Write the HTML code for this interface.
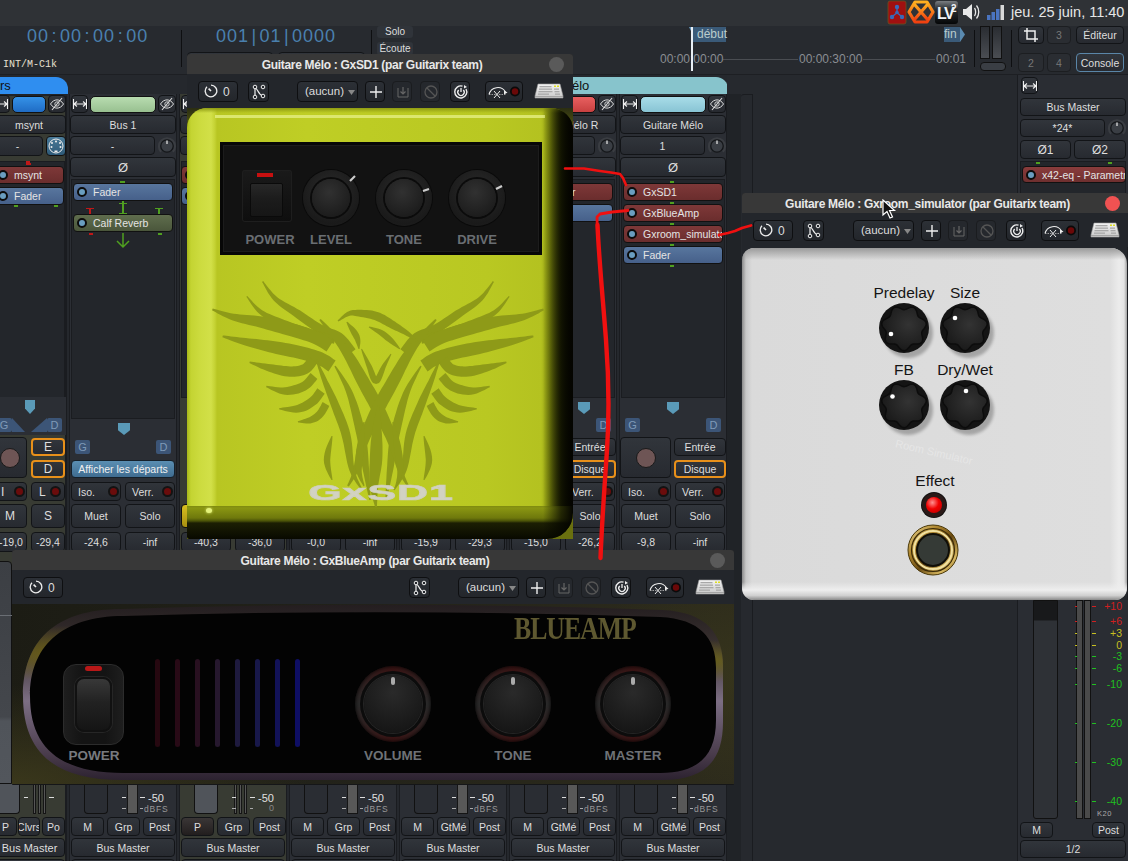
<!DOCTYPE html><html><head><meta charset="utf-8"><style>
*{margin:0;padding:0;box-sizing:border-box}
html,body{width:1128px;height:861px;overflow:hidden;background:#23262b;font-family:"Liberation Sans",sans-serif;color:#d8d8d8}
div{position:absolute}
.b{background:linear-gradient(#31353b,#272a30);border:1px solid #121417;border-radius:4px;font-size:10.5px;color:#dedede;text-align:center;display:flex;align-items:center;justify-content:center;white-space:nowrap;overflow:hidden}
.t{white-space:nowrap}
.plug{border:1px solid #111;border-radius:4px;font-size:10.5px;color:#e4e4e4;display:flex;align-items:center;white-space:nowrap;overflow:hidden;padding-left:19px}
.dot{position:absolute;left:3px;top:3px;width:10px;height:10px;border-radius:50%;background:#6a9ec0;border:2px solid #0c0c0c}
.tb{background:linear-gradient(#2c3036,#23262b);border:1px solid #0e0f11;border-radius:4px}
.led{position:absolute;width:11px;height:11px;border-radius:50%;background:#6a0c0c;border:2px solid #131313;top:3px}
svg{position:absolute}
</style></head><body>
<div style="left:0px;top:0px;width:1128px;height:26px;background:#2f3236"></div>
<div class="t" style="left:1011px;top:4px;font-size:14.5px;color:#e6e6e6">jeu. 25 juin, 11:40</div>
<svg width="130" height="26" style="left:884px;top:0px"><defs><linearGradient id="og" x1="0" y1="0" x2="0" y2="1"><stop offset="0" stop-color="#ffb020"/><stop offset="1" stop-color="#f04010"/></linearGradient><linearGradient id="lvg" x1="0" y1="0" x2="0" y2="1"><stop offset="0" stop-color="#7a7e82"/><stop offset="0.35" stop-color="#2a2e32"/><stop offset="1" stop-color="#050607"/></linearGradient></defs><rect x="4" y="1" width="18" height="23" rx="2" fill="#a01010" stroke="#6a5020" stroke-width="0.8"/><g fill="#3a6ab8"><circle cx="13" cy="7" r="2.2"/><circle cx="8" cy="17" r="2.2"/><circle cx="18" cy="17" r="2.2"/><circle cx="13" cy="12.5" r="1.8"/></g><path d="M13 9 V12 M12 13.5 L9 16 M14 13.5 L17 16" stroke="#3a6ab8" stroke-width="1.4"/><polygon points="31,2 43,2 49,12 43,22 31,22 25,12" fill="none" stroke="url(#og)" stroke-width="3.2" stroke-linejoin="round"/><path d="M30.5 4.5 L43.5 19.5 M43.5 4.5 L30.5 19.5" stroke="url(#og)" stroke-width="3.2"/><rect x="51" y="1" width="23" height="23" rx="3" fill="url(#lvg)"/><text x="53" y="19" font-family="Liberation Sans" font-weight="bold" font-size="16" fill="#eef2f6" letter-spacing="-1.5">LV</text><text x="67" y="12" font-family="Liberation Sans" font-weight="bold" font-size="10" fill="#eef2f6">2</text><path d="M79 9 H82 L88 4 V20 L82 15 H79 Z" fill="#e8e8e8"/><path d="M90.5 8 C92 10 92 14 90.5 16 M92.5 5.5 C95.5 9 95.5 15 92.5 18.5" stroke="#e8e8e8" stroke-width="1.3" fill="none"/><rect x="103" y="15" width="3.5" height="5" fill="#4a74c0"/><rect x="107.5" y="12" width="3.5" height="8" fill="#4a74c0"/><rect x="112" y="9" width="3.5" height="11" fill="#4a74c0"/><rect x="116.5" y="5" width="3.5" height="15" fill="#d8d8d8"/></svg>
<div style="left:0px;top:26px;width:1128px;height:49px;background:#272a2f"></div>
<div style="left:0px;top:74px;width:1128px;height:1px;background:#1d1f23"></div>
<div class="t" style="left:27px;top:26px;color:#4a80ae;font-size:18px;letter-spacing:1px">00<span style="margin:0 2.5px">:</span>00<span style="margin:0 2.5px">:</span>00<span style="margin:0 2.5px">:</span>00</div>
<div class="t" style="left:3px;top:59px;font-size:10px;color:#e8e0d0;font-family:'Liberation Mono'">INT/M-C1k</div>
<div style="left:181px;top:30px;width:1px;height:37px;background:#0e0f11"></div>
<div class="t" style="left:216px;top:26px;color:#4a80ae;font-size:18px;letter-spacing:1px">001<span style="margin:0 2.4px">|</span>01<span style="margin:0 2.4px">|</span>0000</div>
<div style="left:371px;top:30px;width:1px;height:37px;background:#0e0f11"></div>
<div class="b" style="left:187px;top:52px;width:86px;height:20px;"></div>
<div class="b" style="left:278px;top:52px;width:87px;height:20px;"></div>
<div style="left:377px;top:26px;width:36px;height:12px;background:#30343a;border-radius:3px;font-size:10px;color:#ddd;text-align:center;line-height:12px">Solo</div>
<div style="left:377px;top:42px;width:36px;height:13px;background:#30343a;border-radius:3px;font-size:10px;color:#ddd;text-align:center;line-height:13px">Écoute</div>
<div style="left:660px;top:59px;width:290px;height:1px;background:#4a4d52"></div>
<div style="left:693px;top:27px;width:33px;height:15px;background:#3a5a78;font-size:12px;color:#bcc;line-height:15px;padding-left:4px">début</div>
<div style="left:689px;top:27px;width:4px;height:8px;background:#6a9ac0;clip-path:polygon(0 0,100% 0,100% 100%)"></div>
<div class="t" style="left:660px;top:52px;font-size:12px;color:#8a8d92;background:#272a2f">00:00:00:00</div>
<div class="t" style="left:798px;top:52px;font-size:12px;color:#8a8d92;background:#272a2f;padding:0 1px">00:00:30:00</div>
<div class="t" style="left:935px;top:52px;font-size:12px;color:#8a8d92;background:#272a2f;padding:0 1px">00:01</div>
<div style="left:691px;top:27px;width:2px;height:44px;background:#e8eef4"></div>
<div style="left:944px;top:27px;width:16px;height:15px;background:#3a5a78;font-size:12px;color:#bcc;line-height:15px">fin</div>
<div style="left:960px;top:27px;width:5px;height:15px;background:#5a8ab0;clip-path:polygon(0 0,100% 50%,0 100%)"></div>
<div style="left:974px;top:30px;width:1px;height:37px;background:#0e0f11"></div>
<div style="left:1011px;top:30px;width:1px;height:37px;background:#0e0f11"></div>
<div style="left:980px;top:26px;width:10px;height:33px;background:linear-gradient(#2a2d32,#4a4d52);border:1px solid #111"></div>
<div style="left:992px;top:26px;width:10px;height:33px;background:linear-gradient(#2a2d32,#4a4d52);border:1px solid #111"></div>
<div style="left:980px;top:62px;width:26px;height:9px;background:#3a3e44;border-radius:4px;border:1px solid #111"></div>
<div class="b" style="left:1018px;top:26px;width:26px;height:18px;"><svg width="16" height="16" viewBox="0 0 16 16" style="left:4px;top:0px"><path d="M4 1 V12 H15 M1 4 H12 V15" fill="none" stroke="#eee" stroke-width="1.5"/></svg></div>
<div class="b" style="left:1047px;top:26px;width:24px;height:18px;background:#2a2d32;border-color:#1c1e21"><span style="color:#777">3</span></div>
<div class="b" style="left:1076px;top:26px;width:48px;height:18px;font-size:10.5px">Éditeur</div>
<div class="b" style="left:1018px;top:53px;width:26px;height:19px;background:#2a2d32;border-color:#1c1e21"><span style="color:#777">2</span></div>
<div class="b" style="left:1047px;top:53px;width:24px;height:19px;background:#2a2d32;border-color:#1c1e21"><span style="color:#777">4</span></div>
<div class="b" style="left:1076px;top:53px;width:48px;height:19px;border:1px solid #5a86a8;font-size:10.5px">Console</div>
<div style="left:0px;top:75px;width:1128px;height:786px;background:#25282d"></div>
<div style="left:-4px;top:94px;width:71px;height:767px;background:#383b33;border-right:2px solid #1a1c20"></div>
<div style="left:-4px;top:94px;width:71px;height:2px;background:#202327"></div>
<div class="b" style="left:-8px;top:95px;width:18px;height:18px;"><svg width="16" height="12" viewBox="0 0 16 12" style="left:0px;top:2px"><path d="M1.5 1 V11 M14.5 1 V11 M2 6 H14 M2 6 L5 3.5 M2 6 L5 8.5 M14 6 L11 3.5 M14 6 L11 8.5" fill="none" stroke="#eee" stroke-width="1.1"/></svg></div>
<div style="left:12px;top:96px;width:34px;height:17px;background:linear-gradient(#3592e8,#1f6cc4);border-radius:5px;border:1px solid #111"></div>
<div class="b" style="left:48px;top:95px;width:18px;height:18px;"><svg width="16" height="14" viewBox="0 0 16 14" style="left:0px;top:1px"><path d="M1.5 7 C5 1.5 11 1.5 14.5 7 C11 12.5 5 12.5 1.5 7Z" fill="none" stroke="#ddd" stroke-width="1"/><circle cx="8" cy="7" r="2.2" fill="none" stroke="#ddd" stroke-width="0.9"/><path d="M3 13 L13 1" stroke="#ddd" stroke-width="1.1"/></svg></div>
<div class="b" style="left:-8px;top:115px;width:74px;height:19px;padding-left:0;justify-content:center;font-size:10.5px">msynt</div>
<div class="b" style="left:-8px;top:136px;width:51px;height:20px;">-</div>
<div style="left:46px;top:136px;width:20px;height:20px;background:linear-gradient(#4a7a98,#2e5a78);border:1px solid #111;border-radius:4px"></div>
<svg width="18" height="18" viewBox="0 0 18 18" style="left:47px;top:137px"><circle cx="9" cy="9" r="7" fill="none" stroke="#eee" stroke-width="1"/><circle cx="9" cy="4.5" r="1" fill="#eee"/><circle cx="5" cy="6" r="1" fill="#eee"/><circle cx="13" cy="6" r="1" fill="#eee"/><circle cx="4.5" cy="10" r="1" fill="#eee"/><circle cx="13.5" cy="10" r="1" fill="#eee"/><path d="M7.5 15 H10.5 V13.5 H7.5Z" fill="#eee"/></svg>
<div style="left:-4px;top:161px;width:69px;height:237px;background:#23262b;border:1px solid #1a1c20"></div>
<div style="left:26px;top:163px;width:5px;height:2px;background:#c01818"></div>
<div class="plug" style="left:-6px;top:166px;width:70px;height:18px;background:linear-gradient(#7e3838,#6a2d2d)"><div class="dot"></div>msynt</div>
<div class="plug" style="left:-6px;top:187px;width:70px;height:18px;background:linear-gradient(#58769e,#46608a)"><div class="dot"></div>Fader</div>
<div style="left:14px;top:205px;width:4px;height:2px;background:#50a020"></div>
<div style="left:54px;top:205px;width:4px;height:2px;background:#50a020"></div>
<div style="left:26px;top:161px;width:4px;height:2px;background:#c01818"></div>
<div style="left:-4px;top:397px;width:70px;height:38px;background:#2b2e34"></div>
<div style="left:25px;top:400px;width:10px;height:14px;background:#5a9ab8;clip-path:polygon(0 0,100% 0,100% 60%,50% 100%,0 60%)"></div>
<div style="left:-4px;top:418px;width:16px;height:14px;background:#3c5577;border-radius:2px;font-size:11px;color:#7f9ab8;text-align:center;line-height:14px">G</div>
<div style="left:47px;top:418px;width:15px;height:14px;background:#3c5577;border-radius:2px;font-size:11px;color:#7f9ab8;text-align:center;line-height:14px">D</div>
<div style="left:12px;top:418px;width:13px;height:14px;background:#3c5577;clip-path:polygon(0 0,100% 100%,0 100%)"></div>
<div style="left:31px;top:418px;width:16px;height:14px;background:#3c5577;clip-path:polygon(100% 0,100% 100%,0 100%)"></div>
<div class="b" style="left:-24px;top:437px;width:51px;height:41px;"></div>
<div style="left:0px;top:448px;width:20px;height:20px;border-radius:50%;background:#6e5555;border:1px solid #1a1a1a"></div>
<div class="b" style="left:31px;top:438px;width:34px;height:18px;border:2px solid #e8901a;font-size:12px">E</div>
<div class="b" style="left:31px;top:460px;width:34px;height:18px;border:2px solid #e8901a;font-size:12px">D</div>
<div class="b" style="left:-24px;top:482px;width:51px;height:19px;justify-content:flex-start;padding-left:24px;font-size:12px">I</div>
<div style="left:14px;top:486px;width:11px;height:11px;border-radius:50%;background:#6a0c0c;border:2px solid #131313"></div>
<div class="b" style="left:31px;top:482px;width:34px;height:19px;justify-content:flex-start;padding-left:7px;font-size:12px">L</div>
<div style="left:50px;top:486px;width:11px;height:11px;border-radius:50%;background:#6a0c0c;border:2px solid #131313"></div>
<div class="b" style="left:-24px;top:504px;width:51px;height:24px;justify-content:flex-start;padding-left:28px;font-size:12px">M</div>
<div class="b" style="left:31px;top:504px;width:34px;height:24px;font-size:12px">S</div>
<div class="b" style="left:-24px;top:532px;width:51px;height:20px;justify-content:flex-start;padding-left:22px">-19,0</div>
<div class="b" style="left:31px;top:532px;width:34px;height:20px;">-29,4</div>
<div style="left:-4px;top:561px;width:16px;height:223px;background:linear-gradient(#3c3f44,#44474c 70%,#50545a 72%,#52565c);border:1px solid #111;border-radius:0 4px 0 0"></div>
<div style="left:-4px;top:615px;width:16px;height:1px;background:#6a6e74"></div>
<div style="left:-4px;top:784px;width:24px;height:30px;background:#50545a;border:1px solid #111;border-top:none;border-radius:0 0 4px 4px"></div>
<div style="left:33px;top:784px;width:3px;height:30px;background:#555;border:1px solid #151515"></div>
<div style="left:38px;top:784px;width:3px;height:30px;background:#555;border:1px solid #151515"></div>
<div style="left:43px;top:784px;width:3px;height:30px;background:#555;border:1px solid #151515"></div>
<div style="left:24px;top:797px;width:4px;height:1px;background:#ddd"></div>
<div style="left:49px;top:797px;width:5px;height:1px;background:#ddd"></div>
<div class="b" style="left:-6px;top:817px;width:23px;height:19px;">P</div>
<div class="b" style="left:18px;top:817px;width:22px;height:19px;font-size:10.5px">Clvrs</div>
<div class="b" style="left:42px;top:817px;width:23px;height:19px;">Po</div>
<div class="b" style="left:-6px;top:838px;width:71px;height:19px;font-size:11px">Bus Master</div>
<div class="b" style="left:-6px;top:859px;width:71px;height:19px;"></div>
<div style="left:69px;top:94px;width:108px;height:767px;background:#2b2e34;border-left:1px solid #1a1c20;border-right:1px solid #1a1c20"></div>
<div class="b" style="left:71px;top:95px;width:17px;height:18px;"><svg width="16" height="12" viewBox="0 0 16 12" style="left:0px;top:2px"><path d="M1.5 1 V11 M14.5 1 V11 M2 6 H14 M2 6 L5 3.5 M2 6 L5 8.5 M14 6 L11 3.5 M14 6 L11 8.5" fill="none" stroke="#eee" stroke-width="1.1"/></svg></div>
<div style="left:90px;top:96px;width:66px;height:17px;background:linear-gradient(#b8dcb0,#98c090);border-radius:5px;border:1px solid #111"></div>
<div class="b" style="left:158px;top:95px;width:18px;height:18px;"><svg width="16" height="14" viewBox="0 0 16 14" style="left:0px;top:1px"><path d="M1.5 7 C5 1.5 11 1.5 14.5 7 C11 12.5 5 12.5 1.5 7Z" fill="none" stroke="#ddd" stroke-width="1"/><circle cx="8" cy="7" r="2.2" fill="none" stroke="#ddd" stroke-width="0.9"/><path d="M3 13 L13 1" stroke="#ddd" stroke-width="1.1"/></svg></div>
<div class="b" style="left:70px;top:115px;width:106px;height:19px;font-size:10.5px">Bus 1</div>
<div class="b" style="left:70px;top:136px;width:85px;height:19px;">-</div>
<svg width="20" height="20" style="left:157px;top:136px"><path d="M4.2 15.8 A8 8 0 1 1 15.8 15.8" fill="none" stroke="#3a3d42" stroke-width="2.2"/><circle cx="10" cy="10" r="6.2" fill="#3a3e44" stroke="#141619" stroke-width="1.2"/><path d="M10 4.5 V8" stroke="#ddd" stroke-width="1.3"/></svg>
<div class="b" style="left:70px;top:157px;width:106px;height:20px;font-size:13px">Ø</div>
<div style="left:71px;top:179px;width:104px;height:240px;background:#23262b;border:1px solid #1a1c20"></div>
<div style="left:120px;top:181px;width:5px;height:2px;background:#50a020"></div>
<div class="plug" style="left:73px;top:183px;width:100px;height:18px;background:linear-gradient(#58769e,#46608a)"><div class="dot"></div>Fader</div>
<div style="left:122px;top:201px;width:2px;height:14px;background:#50a020"></div>
<div style="left:119px;top:203px;width:8px;height:1px;background:#50a020"></div>
<div style="left:119px;top:213px;width:8px;height:1px;background:#50a020"></div>
<div style="left:86px;top:208px;width:8px;height:1px;background:#c01818"></div>
<div style="left:89px;top:208px;width:2px;height:6px;background:#c01818"></div>
<div style="left:155px;top:208px;width:8px;height:1px;background:#50a020"></div>
<div style="left:158px;top:208px;width:2px;height:6px;background:#50a020"></div>
<div class="plug" style="left:73px;top:214px;width:100px;height:18px;background:linear-gradient(#5f6d4d,#4a563b)"><div class="dot"></div>Calf Reverb</div>
<div style="left:89px;top:233px;width:4px;height:2px;background:#c01818"></div>
<div style="left:158px;top:233px;width:4px;height:2px;background:#50a020"></div>
<svg width="16" height="16" style="left:115px;top:233px"><path d="M8 0 V14 M2 8 L8 14 L14 8" fill="none" stroke="#50a020" stroke-width="1.5"/></svg>
<div style="left:118px;top:423px;width:12px;height:12px;background:#5a9ab8;clip-path:polygon(0 0,100% 0,100% 60%,50% 100%,0 60%)"></div>
<div style="left:75px;top:440px;width:15px;height:14px;background:#3c5577;border-radius:2px;font-size:11px;color:#7f9ab8;text-align:center;line-height:14px">G</div>
<div style="left:156px;top:440px;width:15px;height:14px;background:#3c5577;border-radius:2px;font-size:11px;color:#7f9ab8;text-align:center;line-height:14px">D</div>
<div class="b" style="left:71px;top:460px;width:104px;height:18px;background:linear-gradient(#5a8eb2,#3f6c90);color:#f0f0f0;font-size:10.5px;border-color:#15202a">Afficher les départs</div>
<div class="b" style="left:71px;top:482px;width:50px;height:19px;justify-content:flex-start;padding-left:6px;font-size:10.5px">Iso.</div>
<div style="left:108px;top:486px;width:11px;height:11px;border-radius:50%;background:#6a0c0c;border:2px solid #131313"></div>
<div class="b" style="left:125px;top:482px;width:50px;height:19px;justify-content:flex-start;padding-left:6px;font-size:10.5px">Verr.</div>
<div style="left:162px;top:486px;width:11px;height:11px;border-radius:50%;background:#6a0c0c;border:2px solid #131313"></div>
<div class="b" style="left:71px;top:504px;width:50px;height:24px;font-size:10.5px">Muet</div>
<div class="b" style="left:125px;top:504px;width:50px;height:24px;font-size:10.5px">Solo</div>
<div class="b" style="left:71px;top:532px;width:50px;height:20px;">-24,6</div>
<div class="b" style="left:125px;top:532px;width:50px;height:20px;">-inf</div>
<div style="left:84px;top:784px;width:24px;height:30px;background:#2a2d33;border:1px solid #111;border-top:none;border-radius:0 0 4px 4px"></div>
<div style="left:127px;top:784px;width:11px;height:30px;background:#585858;border:1px solid #151515"></div>
<div style="left:122px;top:797px;width:4px;height:1px;background:#ddd"></div>
<div style="left:140px;top:797px;width:5px;height:1px;background:#ddd"></div>
<div style="left:122px;top:808px;width:4px;height:1px;background:#aaa"></div>
<div style="left:140px;top:808px;width:3px;height:1px;background:#aaa"></div>
<div class="t" style="left:148px;top:792px;font-size:11px;color:#e0e0e0">-50</div>
<div class="t" style="left:144px;top:804px;font-size:8.5px;color:#999;letter-spacing:0.8px">dBFS</div>
<div class="b" style="left:71px;top:817px;width:33px;height:19px;">M</div>
<div class="b" style="left:107px;top:817px;width:33px;height:19px;">Grp</div>
<div class="b" style="left:143px;top:817px;width:33px;height:19px;">Post</div>
<div class="b" style="left:71px;top:838px;width:104px;height:19px;">Bus Master</div>
<div class="b" style="left:71px;top:859px;width:104px;height:19px;"></div>
<div style="left:179px;top:94px;width:108px;height:767px;background:#383b33;border-left:1px solid #1a1c20;border-right:1px solid #1a1c20"></div>
<div class="b" style="left:181px;top:95px;width:17px;height:18px;"><svg width="16" height="12" viewBox="0 0 16 12" style="left:0px;top:2px"><path d="M1.5 1 V11 M14.5 1 V11 M2 6 H14 M2 6 L5 3.5 M2 6 L5 8.5 M14 6 L11 3.5 M14 6 L11 8.5" fill="none" stroke="#eee" stroke-width="1.1"/></svg></div>
<div style="left:200px;top:96px;width:66px;height:17px;background:#e0c030;border-radius:5px;border:1px solid #111"></div>
<div class="b" style="left:268px;top:95px;width:18px;height:18px;"><svg width="16" height="14" viewBox="0 0 16 14" style="left:0px;top:1px"><path d="M1.5 7 C5 1.5 11 1.5 14.5 7 C11 12.5 5 12.5 1.5 7Z" fill="none" stroke="#ddd" stroke-width="1"/><circle cx="8" cy="7" r="2.2" fill="none" stroke="#ddd" stroke-width="0.9"/><path d="M3 13 L13 1" stroke="#ddd" stroke-width="1.1"/></svg></div>
<div class="b" style="left:180px;top:115px;width:106px;height:19px;font-size:10.5px"></div>
<div class="b" style="left:180px;top:136px;width:85px;height:19px;">-</div>
<svg width="20" height="20" style="left:267px;top:136px"><path d="M4.2 15.8 A8 8 0 1 1 15.8 15.8" fill="none" stroke="#3a3d42" stroke-width="2.2"/><circle cx="10" cy="10" r="6.2" fill="#3a3e44" stroke="#141619" stroke-width="1.2"/><path d="M10 4.5 V8" stroke="#ddd" stroke-width="1.3"/></svg>
<div class="b" style="left:180px;top:157px;width:106px;height:20px;font-size:13px">Ø</div>
<div style="left:180px;top:157px;width:106px;height:22px;background:#383b33"></div>
<div style="left:181px;top:161px;width:104px;height:237px;background:#23262b;border:1px solid #1a1c20"></div>
<div class="plug" style="left:181px;top:166px;width:100px;height:18px;background:linear-gradient(#7e3838,#6a2d2d)"><div class="dot"></div>msynt</div>
<div class="plug" style="left:181px;top:187px;width:100px;height:18px;background:linear-gradient(#58769e,#46608a)"><div class="dot"></div>Fader</div>
<div style="left:180px;top:435px;width:106px;height:426px;background:#383b33"></div>
<div style="left:181px;top:504px;width:50px;height:24px;background:linear-gradient(#d8c020,#a89010);border:1px solid #111;border-radius:4px"></div>
<div class="b" style="left:181px;top:532px;width:50px;height:20px;">-40,3</div>
<div class="b" style="left:235px;top:532px;width:50px;height:20px;">-36,0</div>
<div style="left:194px;top:784px;width:24px;height:30px;background:#50545a;border:1px solid #111;border-top:none;border-radius:0 0 4px 4px"></div>
<div style="left:234px;top:784px;width:3px;height:30px;background:#555;border:1px solid #151515"></div>
<div style="left:239px;top:784px;width:3px;height:30px;background:#555;border:1px solid #151515"></div>
<div style="left:244px;top:784px;width:3px;height:30px;background:#555;border:1px solid #151515"></div>
<div style="left:232px;top:797px;width:4px;height:1px;background:#ddd"></div>
<div style="left:250px;top:797px;width:5px;height:1px;background:#ddd"></div>
<div style="left:232px;top:808px;width:4px;height:1px;background:#aaa"></div>
<div style="left:250px;top:808px;width:3px;height:1px;background:#aaa"></div>
<div class="t" style="left:258px;top:792px;font-size:11px;color:#e0e0e0">-50</div>
<div class="t" style="left:269px;top:803px;font-size:9px;color:#888">0</div>
<div class="b" style="left:181px;top:817px;width:33px;height:19px;background:linear-gradient(#3a3636,#221e1e)">P</div>
<div class="b" style="left:217px;top:817px;width:33px;height:19px;">Grp</div>
<div class="b" style="left:253px;top:817px;width:33px;height:19px;">Post</div>
<div class="b" style="left:181px;top:838px;width:104px;height:19px;">Bus Master</div>
<div class="b" style="left:181px;top:859px;width:104px;height:19px;"></div>
<div style="left:289px;top:94px;width:108px;height:767px;background:#2b2e34;border-left:1px solid #1a1c20;border-right:1px solid #1a1c20"></div>
<div class="b" style="left:291px;top:95px;width:17px;height:18px;"><svg width="16" height="12" viewBox="0 0 16 12" style="left:0px;top:2px"><path d="M1.5 1 V11 M14.5 1 V11 M2 6 H14 M2 6 L5 3.5 M2 6 L5 8.5 M14 6 L11 3.5 M14 6 L11 8.5" fill="none" stroke="#eee" stroke-width="1.1"/></svg></div>
<div style="left:310px;top:96px;width:66px;height:17px;background:#888;border-radius:5px;border:1px solid #111"></div>
<div class="b" style="left:378px;top:95px;width:18px;height:18px;"><svg width="16" height="14" viewBox="0 0 16 14" style="left:0px;top:1px"><path d="M1.5 7 C5 1.5 11 1.5 14.5 7 C11 12.5 5 12.5 1.5 7Z" fill="none" stroke="#ddd" stroke-width="1"/><circle cx="8" cy="7" r="2.2" fill="none" stroke="#ddd" stroke-width="0.9"/><path d="M3 13 L13 1" stroke="#ddd" stroke-width="1.1"/></svg></div>
<div class="b" style="left:290px;top:115px;width:106px;height:19px;font-size:10.5px"></div>
<div class="b" style="left:290px;top:136px;width:85px;height:19px;">-</div>
<svg width="20" height="20" style="left:377px;top:136px"><path d="M4.2 15.8 A8 8 0 1 1 15.8 15.8" fill="none" stroke="#3a3d42" stroke-width="2.2"/><circle cx="10" cy="10" r="6.2" fill="#3a3e44" stroke="#141619" stroke-width="1.2"/><path d="M10 4.5 V8" stroke="#ddd" stroke-width="1.3"/></svg>
<div class="b" style="left:290px;top:157px;width:106px;height:20px;font-size:13px">Ø</div>
<div class="b" style="left:291px;top:532px;width:50px;height:20px;">-0,0</div>
<div class="b" style="left:345px;top:532px;width:50px;height:20px;">-inf</div>
<div style="left:304px;top:784px;width:24px;height:30px;background:#2a2d33;border:1px solid #111;border-top:none;border-radius:0 0 4px 4px"></div>
<div style="left:347px;top:784px;width:11px;height:30px;background:#585858;border:1px solid #151515"></div>
<div style="left:342px;top:797px;width:4px;height:1px;background:#ddd"></div>
<div style="left:360px;top:797px;width:5px;height:1px;background:#ddd"></div>
<div style="left:342px;top:808px;width:4px;height:1px;background:#aaa"></div>
<div style="left:360px;top:808px;width:3px;height:1px;background:#aaa"></div>
<div class="t" style="left:368px;top:792px;font-size:11px;color:#e0e0e0">-50</div>
<div class="t" style="left:364px;top:804px;font-size:8.5px;color:#999;letter-spacing:0.8px">dBFS</div>
<div class="b" style="left:291px;top:817px;width:33px;height:19px;">M</div>
<div class="b" style="left:327px;top:817px;width:33px;height:19px;">Grp</div>
<div class="b" style="left:363px;top:817px;width:33px;height:19px;">Post</div>
<div class="b" style="left:291px;top:838px;width:104px;height:19px;">Bus Master</div>
<div class="b" style="left:291px;top:859px;width:104px;height:19px;"></div>
<div style="left:399px;top:94px;width:108px;height:767px;background:#2b2e34;border-left:1px solid #1a1c20;border-right:1px solid #1a1c20"></div>
<div class="b" style="left:401px;top:95px;width:17px;height:18px;"><svg width="16" height="12" viewBox="0 0 16 12" style="left:0px;top:2px"><path d="M1.5 1 V11 M14.5 1 V11 M2 6 H14 M2 6 L5 3.5 M2 6 L5 8.5 M14 6 L11 3.5 M14 6 L11 8.5" fill="none" stroke="#eee" stroke-width="1.1"/></svg></div>
<div style="left:420px;top:96px;width:66px;height:17px;background:#888;border-radius:5px;border:1px solid #111"></div>
<div class="b" style="left:488px;top:95px;width:18px;height:18px;"><svg width="16" height="14" viewBox="0 0 16 14" style="left:0px;top:1px"><path d="M1.5 7 C5 1.5 11 1.5 14.5 7 C11 12.5 5 12.5 1.5 7Z" fill="none" stroke="#ddd" stroke-width="1"/><circle cx="8" cy="7" r="2.2" fill="none" stroke="#ddd" stroke-width="0.9"/><path d="M3 13 L13 1" stroke="#ddd" stroke-width="1.1"/></svg></div>
<div class="b" style="left:400px;top:115px;width:106px;height:19px;font-size:10.5px"></div>
<div class="b" style="left:400px;top:136px;width:85px;height:19px;">-</div>
<svg width="20" height="20" style="left:487px;top:136px"><path d="M4.2 15.8 A8 8 0 1 1 15.8 15.8" fill="none" stroke="#3a3d42" stroke-width="2.2"/><circle cx="10" cy="10" r="6.2" fill="#3a3e44" stroke="#141619" stroke-width="1.2"/><path d="M10 4.5 V8" stroke="#ddd" stroke-width="1.3"/></svg>
<div class="b" style="left:400px;top:157px;width:106px;height:20px;font-size:13px">Ø</div>
<div class="b" style="left:401px;top:532px;width:50px;height:20px;">-15,9</div>
<div class="b" style="left:455px;top:532px;width:50px;height:20px;">-29,3</div>
<div style="left:414px;top:784px;width:24px;height:30px;background:#2a2d33;border:1px solid #111;border-top:none;border-radius:0 0 4px 4px"></div>
<div style="left:457px;top:784px;width:11px;height:30px;background:#585858;border:1px solid #151515"></div>
<div style="left:452px;top:797px;width:4px;height:1px;background:#ddd"></div>
<div style="left:470px;top:797px;width:5px;height:1px;background:#ddd"></div>
<div style="left:452px;top:808px;width:4px;height:1px;background:#aaa"></div>
<div style="left:470px;top:808px;width:3px;height:1px;background:#aaa"></div>
<div class="t" style="left:478px;top:792px;font-size:11px;color:#e0e0e0">-50</div>
<div class="t" style="left:474px;top:804px;font-size:8.5px;color:#999;letter-spacing:0.8px">dBFS</div>
<div class="b" style="left:401px;top:817px;width:33px;height:19px;">M</div>
<div class="b" style="left:437px;top:817px;width:33px;height:19px;">GtMé</div>
<div class="b" style="left:473px;top:817px;width:33px;height:19px;">Post</div>
<div class="b" style="left:401px;top:838px;width:104px;height:19px;">Bus Master</div>
<div class="b" style="left:401px;top:859px;width:104px;height:19px;"></div>
<div style="left:509px;top:94px;width:108px;height:767px;background:#2b2e34;border-left:1px solid #1a1c20;border-right:1px solid #1a1c20"></div>
<div class="b" style="left:511px;top:95px;width:17px;height:18px;"><svg width="16" height="12" viewBox="0 0 16 12" style="left:0px;top:2px"><path d="M1.5 1 V11 M14.5 1 V11 M2 6 H14 M2 6 L5 3.5 M2 6 L5 8.5 M14 6 L11 3.5 M14 6 L11 8.5" fill="none" stroke="#eee" stroke-width="1.1"/></svg></div>
<div style="left:530px;top:96px;width:66px;height:17px;background:linear-gradient(#e86060,#c84040);border-radius:5px;border:1px solid #111"></div>
<div class="b" style="left:598px;top:95px;width:18px;height:18px;"><svg width="16" height="14" viewBox="0 0 16 14" style="left:0px;top:1px"><path d="M1.5 7 C5 1.5 11 1.5 14.5 7 C11 12.5 5 12.5 1.5 7Z" fill="none" stroke="#ddd" stroke-width="1"/><circle cx="8" cy="7" r="2.2" fill="none" stroke="#ddd" stroke-width="0.9"/><path d="M3 13 L13 1" stroke="#ddd" stroke-width="1.1"/></svg></div>
<div class="b" style="left:510px;top:115px;width:106px;height:19px;font-size:10.5px">Guitare Mélo R</div>
<div class="b" style="left:510px;top:136px;width:85px;height:19px;">1</div>
<svg width="20" height="20" style="left:597px;top:136px"><path d="M4.2 15.8 A8 8 0 1 1 15.8 15.8" fill="none" stroke="#3a3d42" stroke-width="2.2"/><circle cx="10" cy="10" r="6.2" fill="#3a3e44" stroke="#141619" stroke-width="1.2"/><path d="M10 4.5 V8" stroke="#ddd" stroke-width="1.3"/></svg>
<div class="b" style="left:510px;top:157px;width:106px;height:20px;font-size:13px">Ø</div>
<div style="left:511px;top:179px;width:104px;height:219px;background:#23262b;border:1px solid #1a1c20"></div>
<div style="left:578px;top:402px;width:12px;height:12px;background:#5a9ab8;clip-path:polygon(0 0,100% 0,100% 60%,50% 100%,0 60%)"></div>
<div style="left:515px;top:418px;width:15px;height:14px;background:#3c5577;border-radius:2px;font-size:11px;color:#7f9ab8;text-align:center;line-height:14px">G</div>
<div style="left:596px;top:418px;width:15px;height:14px;background:#3c5577;border-radius:2px;font-size:11px;color:#7f9ab8;text-align:center;line-height:14px">D</div>
<div class="b" style="left:510px;top:437px;width:51px;height:41px;"></div>
<div style="left:526px;top:448px;width:20px;height:20px;border-radius:50%;background:#6e5555;border:1px solid #1a1a1a"></div>
<div class="b" style="left:564px;top:438px;width:52px;height:18px;font-size:10.5px">Entrée</div>
<div class="b" style="left:564px;top:460px;width:52px;height:18px;border:2px solid #e8901a;font-size:10.5px">Disque</div>
<div class="b" style="left:511px;top:482px;width:50px;height:19px;justify-content:flex-start;padding-left:6px;font-size:10.5px">Iso.</div>
<div style="left:548px;top:486px;width:11px;height:11px;border-radius:50%;background:#6a0c0c;border:2px solid #131313"></div>
<div class="b" style="left:565px;top:482px;width:50px;height:19px;justify-content:flex-start;padding-left:6px;font-size:10.5px">Verr.</div>
<div style="left:602px;top:486px;width:11px;height:11px;border-radius:50%;background:#6a0c0c;border:2px solid #131313"></div>
<div class="b" style="left:511px;top:504px;width:50px;height:24px;font-size:10.5px">Muet</div>
<div class="b" style="left:565px;top:504px;width:50px;height:24px;font-size:10.5px">Solo</div>
<div class="b" style="left:511px;top:532px;width:50px;height:20px;">-15,0</div>
<div class="b" style="left:565px;top:532px;width:50px;height:20px;">-26,2</div>
<div style="left:524px;top:784px;width:24px;height:30px;background:#2a2d33;border:1px solid #111;border-top:none;border-radius:0 0 4px 4px"></div>
<div style="left:567px;top:784px;width:11px;height:30px;background:#585858;border:1px solid #151515"></div>
<div style="left:562px;top:797px;width:4px;height:1px;background:#ddd"></div>
<div style="left:580px;top:797px;width:5px;height:1px;background:#ddd"></div>
<div style="left:562px;top:808px;width:4px;height:1px;background:#aaa"></div>
<div style="left:580px;top:808px;width:3px;height:1px;background:#aaa"></div>
<div class="t" style="left:588px;top:792px;font-size:11px;color:#e0e0e0">-50</div>
<div class="t" style="left:584px;top:804px;font-size:8.5px;color:#999;letter-spacing:0.8px">dBFS</div>
<div class="b" style="left:511px;top:817px;width:33px;height:19px;">M</div>
<div class="b" style="left:547px;top:817px;width:33px;height:19px;">GtMé</div>
<div class="b" style="left:583px;top:817px;width:33px;height:19px;">Post</div>
<div class="b" style="left:511px;top:838px;width:104px;height:19px;">Bus Master</div>
<div class="b" style="left:511px;top:859px;width:104px;height:19px;"></div>
<div class="plug" style="left:513px;top:183px;width:100px;height:18px;background:linear-gradient(#7e3838,#6a2d2d)"><div class="dot"></div><span style='padding-left:15px'>Mirror</span></div>
<div class="plug" style="left:513px;top:204px;width:100px;height:18px;background:linear-gradient(#58769e,#46608a)"><div class="dot"></div>Fader</div>
<div style="left:619px;top:94px;width:108px;height:767px;background:#2b2e34;border-left:1px solid #1a1c20;border-right:1px solid #1a1c20"></div>
<div class="b" style="left:621px;top:95px;width:17px;height:18px;"><svg width="16" height="12" viewBox="0 0 16 12" style="left:0px;top:2px"><path d="M1.5 1 V11 M14.5 1 V11 M2 6 H14 M2 6 L5 3.5 M2 6 L5 8.5 M14 6 L11 3.5 M14 6 L11 8.5" fill="none" stroke="#eee" stroke-width="1.1"/></svg></div>
<div style="left:640px;top:96px;width:66px;height:17px;background:linear-gradient(#a8dce8,#88c4d4);border-radius:5px;border:1px solid #111"></div>
<div class="b" style="left:708px;top:95px;width:18px;height:18px;"><svg width="16" height="14" viewBox="0 0 16 14" style="left:0px;top:1px"><path d="M1.5 7 C5 1.5 11 1.5 14.5 7 C11 12.5 5 12.5 1.5 7Z" fill="none" stroke="#ddd" stroke-width="1"/><circle cx="8" cy="7" r="2.2" fill="none" stroke="#ddd" stroke-width="0.9"/><path d="M3 13 L13 1" stroke="#ddd" stroke-width="1.1"/></svg></div>
<div class="b" style="left:620px;top:115px;width:106px;height:19px;font-size:10.5px">Guitare Mélo</div>
<div class="b" style="left:620px;top:136px;width:85px;height:19px;">1</div>
<svg width="20" height="20" style="left:707px;top:136px"><path d="M4.2 15.8 A8 8 0 1 1 15.8 15.8" fill="none" stroke="#3a3d42" stroke-width="2.2"/><circle cx="10" cy="10" r="6.2" fill="#3a3e44" stroke="#141619" stroke-width="1.2"/><path d="M10 4.5 V8" stroke="#ddd" stroke-width="1.3"/></svg>
<div class="b" style="left:620px;top:157px;width:106px;height:20px;font-size:13px">Ø</div>
<div style="left:621px;top:179px;width:104px;height:219px;background:#23262b;border:1px solid #1a1c20"></div>
<div style="left:667px;top:402px;width:12px;height:12px;background:#5a9ab8;clip-path:polygon(0 0,100% 0,100% 60%,50% 100%,0 60%)"></div>
<div style="left:625px;top:418px;width:15px;height:14px;background:#3c5577;border-radius:2px;font-size:11px;color:#7f9ab8;text-align:center;line-height:14px">G</div>
<div style="left:706px;top:418px;width:15px;height:14px;background:#3c5577;border-radius:2px;font-size:11px;color:#7f9ab8;text-align:center;line-height:14px">D</div>
<div class="b" style="left:620px;top:437px;width:51px;height:41px;"></div>
<div style="left:636px;top:448px;width:20px;height:20px;border-radius:50%;background:#6e5555;border:1px solid #1a1a1a"></div>
<div class="b" style="left:674px;top:438px;width:52px;height:18px;font-size:10.5px">Entrée</div>
<div class="b" style="left:674px;top:460px;width:52px;height:18px;border:2px solid #e8901a;font-size:10.5px">Disque</div>
<div class="b" style="left:621px;top:482px;width:50px;height:19px;justify-content:flex-start;padding-left:6px;font-size:10.5px">Iso.</div>
<div style="left:658px;top:486px;width:11px;height:11px;border-radius:50%;background:#6a0c0c;border:2px solid #131313"></div>
<div class="b" style="left:675px;top:482px;width:50px;height:19px;justify-content:flex-start;padding-left:6px;font-size:10.5px">Verr.</div>
<div style="left:712px;top:486px;width:11px;height:11px;border-radius:50%;background:#6a0c0c;border:2px solid #131313"></div>
<div class="b" style="left:621px;top:504px;width:50px;height:24px;font-size:10.5px">Muet</div>
<div class="b" style="left:675px;top:504px;width:50px;height:24px;font-size:10.5px">Solo</div>
<div class="b" style="left:621px;top:532px;width:50px;height:20px;">-9,8</div>
<div class="b" style="left:675px;top:532px;width:50px;height:20px;">-inf</div>
<div style="left:634px;top:784px;width:24px;height:30px;background:#2a2d33;border:1px solid #111;border-top:none;border-radius:0 0 4px 4px"></div>
<div style="left:677px;top:784px;width:11px;height:30px;background:#585858;border:1px solid #151515"></div>
<div style="left:672px;top:797px;width:4px;height:1px;background:#ddd"></div>
<div style="left:690px;top:797px;width:5px;height:1px;background:#ddd"></div>
<div style="left:672px;top:808px;width:4px;height:1px;background:#aaa"></div>
<div style="left:690px;top:808px;width:3px;height:1px;background:#aaa"></div>
<div class="t" style="left:698px;top:792px;font-size:11px;color:#e0e0e0">-50</div>
<div class="t" style="left:694px;top:804px;font-size:8.5px;color:#999;letter-spacing:0.8px">dBFS</div>
<div class="b" style="left:621px;top:817px;width:33px;height:19px;">M</div>
<div class="b" style="left:657px;top:817px;width:33px;height:19px;">GtMé</div>
<div class="b" style="left:693px;top:817px;width:33px;height:19px;">Post</div>
<div class="b" style="left:621px;top:838px;width:104px;height:19px;">Bus Master</div>
<div class="b" style="left:621px;top:859px;width:104px;height:19px;"></div>
<div class="plug" style="left:623px;top:183px;width:100px;height:18px;background:linear-gradient(#7e3838,#6a2d2d)"><div class="dot"></div>GxSD1</div>
<div style="left:670px;top:181px;width:4px;height:2px;background:#50a020"></div>
<div class="plug" style="left:623px;top:204px;width:100px;height:18px;background:linear-gradient(#7e3838,#6a2d2d)"><div class="dot"></div>GxBlueAmp</div>
<div style="left:670px;top:202px;width:4px;height:2px;background:#50a020"></div>
<div class="plug" style="left:623px;top:225px;width:100px;height:18px;background:linear-gradient(#7e3838,#6a2d2d)"><div class="dot"></div>Gxroom_simulator</div>
<div style="left:670px;top:223px;width:4px;height:2px;background:#50a020"></div>
<div class="plug" style="left:623px;top:246px;width:100px;height:18px;background:linear-gradient(#58769e,#46608a)"><div class="dot"></div>Fader</div>
<div style="left:670px;top:244px;width:4px;height:2px;background:#50a020"></div>
<div style="left:670px;top:265px;width:4px;height:2px;background:#50a020"></div>
<div style="left:0px;top:77px;width:68px;height:17px;background:#2f8ef0;border-radius:0 12px 0 0;font-size:13px;color:#111;line-height:17px">rs</div>
<div style="left:572px;top:77px;width:156px;height:17px;background:#87c4cc;border-radius:0 12px 0 0;font-size:13px;color:#111;line-height:17px">élo</div>
<div style="left:727px;top:75px;width:291px;height:786px;background:#26292e"></div>
<div style="left:727px;top:94px;width:14px;height:767px;background:#202327"></div>
<div style="left:741px;top:94px;width:12px;height:767px;background:#26292e;border-right:1px solid #1a1c20;border-top:1px solid #1a1c20;border-radius:3px 0 0 0"></div>
<div style="left:1017px;top:75px;width:111px;height:786px;background:#2a2d33;border-left:1px solid #1a1c20"></div>
<div class="b" style="left:1021px;top:77px;width:17px;height:17px;"><svg width="16" height="12" viewBox="0 0 16 12" style="left:0px;top:2px"><path d="M1.5 1 V11 M14.5 1 V11 M2 6 H14 M2 6 L5 3.5 M2 6 L5 8.5 M14 6 L11 3.5 M14 6 L11 8.5" fill="none" stroke="#eee" stroke-width="1.1"/></svg></div>
<div class="b" style="left:1020px;top:98px;width:106px;height:18px;font-size:10.5px">Bus Master</div>
<div class="b" style="left:1020px;top:119px;width:85px;height:18px;">*24*</div>
<svg width="20" height="20" style="left:1107px;top:118px"><path d="M4.2 15.8 A8 8 0 1 1 15.8 15.8" fill="none" stroke="#3a3d42" stroke-width="2.2"/><circle cx="10" cy="10" r="6.2" fill="#3a3e44" stroke="#141619" stroke-width="1.2"/><path d="M10 4.5 V8" stroke="#ddd" stroke-width="1.3"/></svg>
<div class="b" style="left:1020px;top:140px;width:51px;height:19px;font-size:12px">Ø1</div>
<div class="b" style="left:1074px;top:140px;width:52px;height:19px;font-size:12px">Ø2</div>
<div style="left:1020px;top:161px;width:106px;height:40px;background:#23262b;border:1px solid #1a1c20"></div>
<div style="left:1036px;top:162px;width:4px;height:2px;background:#50a020"></div>
<div style="left:1108px;top:162px;width:4px;height:2px;background:#50a020"></div>
<div class="plug" style="left:1022px;top:166px;width:104px;height:17px;background:linear-gradient(#8a3c3c,#6e2f2f)"><div class="dot"></div>x42-eq - Parametr</div>
<div style="left:1033px;top:600px;width:25px;height:219px;background:linear-gradient(#18191b 0,#18191b 19px,#2e3136 20px);border:1px solid #111;border-radius:0 0 3px 3px"></div>
<div style="left:1076px;top:600px;width:7px;height:219px;background:#4a4a4a;border:1px solid #111"></div>
<div style="left:1084px;top:600px;width:7px;height:219px;background:#4a4a4a;border:1px solid #111"></div>
<div style="left:1075px;top:606px;width:2px;height:1px;background:#d02020"></div>
<div style="left:1092px;top:606px;width:4px;height:1px;background:#d02020"></div>
<div class="t" style="left:1096px;top:600px;width:26px;text-align:right;font-size:10.5px;color:#d02020">+10</div>
<div style="left:1075px;top:621px;width:2px;height:1px;background:#d02020"></div>
<div style="left:1092px;top:621px;width:4px;height:1px;background:#d02020"></div>
<div class="t" style="left:1096px;top:615px;width:26px;text-align:right;font-size:10.5px;color:#d02020">+6</div>
<div style="left:1075px;top:633px;width:2px;height:1px;background:#c8c020"></div>
<div style="left:1092px;top:633px;width:4px;height:1px;background:#c8c020"></div>
<div class="t" style="left:1096px;top:627px;width:26px;text-align:right;font-size:10.5px;color:#c8c020">+3</div>
<div style="left:1075px;top:645px;width:2px;height:1px;background:#c8c020"></div>
<div style="left:1092px;top:645px;width:4px;height:1px;background:#c8c020"></div>
<div class="t" style="left:1096px;top:639px;width:26px;text-align:right;font-size:10.5px;color:#c8c020">0</div>
<div style="left:1075px;top:656px;width:2px;height:1px;background:#20c020"></div>
<div style="left:1092px;top:656px;width:4px;height:1px;background:#20c020"></div>
<div class="t" style="left:1096px;top:650px;width:26px;text-align:right;font-size:10.5px;color:#20c020">-3</div>
<div style="left:1075px;top:668px;width:2px;height:1px;background:#20c020"></div>
<div style="left:1092px;top:668px;width:4px;height:1px;background:#20c020"></div>
<div class="t" style="left:1096px;top:662px;width:26px;text-align:right;font-size:10.5px;color:#20c020">-6</div>
<div style="left:1075px;top:684px;width:2px;height:1px;background:#20c020"></div>
<div style="left:1092px;top:684px;width:4px;height:1px;background:#20c020"></div>
<div class="t" style="left:1096px;top:678px;width:26px;text-align:right;font-size:10.5px;color:#20c020">-10</div>
<div style="left:1075px;top:723px;width:2px;height:1px;background:#20c020"></div>
<div style="left:1092px;top:723px;width:4px;height:1px;background:#20c020"></div>
<div class="t" style="left:1096px;top:717px;width:26px;text-align:right;font-size:10.5px;color:#20c020">-20</div>
<div style="left:1075px;top:762px;width:2px;height:1px;background:#20c020"></div>
<div style="left:1092px;top:762px;width:4px;height:1px;background:#20c020"></div>
<div class="t" style="left:1096px;top:756px;width:26px;text-align:right;font-size:10.5px;color:#20c020">-30</div>
<div style="left:1075px;top:801px;width:2px;height:1px;background:#20c020"></div>
<div style="left:1092px;top:801px;width:4px;height:1px;background:#20c020"></div>
<div class="t" style="left:1096px;top:795px;width:26px;text-align:right;font-size:10.5px;color:#20c020">-40</div>
<div class="t" style="left:1097px;top:809px;font-size:7.5px;color:#aaa;letter-spacing:0.5px">K20</div>
<div class="b" style="left:1020px;top:822px;width:33px;height:16px;">M</div>
<div class="b" style="left:1092px;top:822px;width:33px;height:16px;">Post</div>
<div class="b" style="left:1020px;top:840px;width:106px;height:18px;">1/2</div><div style="left:187px;top:54px;width:386px;height:485px;background:#23262b;border:1px solid #151618;overflow:hidden;border-radius:3px 3px 0 0"></div>
<div style="left:187px;top:54px;width:386px;height:20px;background:#383838;border-radius:3px 3px 0 0"></div>
<div class="t" style="left:191px;top:58px;width:362px;text-align:center;font-size:12px;font-weight:bold;color:#e8e8e8;letter-spacing:-0.3px">Guitare Mélo : GxSD1 (par Guitarix team)</div>
<div style="left:549px;top:57px;width:15px;height:15px;background:#5a5a5a;border-radius:50%"></div>
<div style="left:187px;top:74px;width:386px;height:34px;background:#23262b"></div>
<div class="tb" style="left:198px;top:81px;width:40px;height:21px"><svg width="14" height="14" viewBox="0 0 14 14" style="left:5px;top:2px"><path d="M7 1.2 A5.8 5.8 0 1 1 3 2.8" fill="none" stroke="#eee" stroke-width="1.3"/><path d="M4.6 4.6 L7 7" stroke="#eee" stroke-width="1.6"/></svg><div class="t" style="left:24px;top:3px;font-size:12px;color:#ddd">0</div></div>
<div class="tb" style="left:297px;top:81px;width:61px;height:21px"><div class="t" style="left:7px;top:3px;font-size:11.5px;color:#ddd">(aucun)</div><svg width="7" height="5" style="left:50px;top:8px"><path d="M0 0 H7 L3.5 5Z" fill="#888"/></svg></div>
<div class="tb" style="left:365px;top:81px;width:20px;height:21px"><svg width="14" height="14" viewBox="0 0 14 14" style="left:3px;top:3px"><path d="M7 1 V13 M1 7 H13" stroke="#eee" stroke-width="1.4"/></svg></div>
<div class="tb" style="left:392px;top:81px;width:20px;height:21px;background:#25282d;border-color:#1a1c1f"><svg width="14" height="14" viewBox="0 0 14 14" style="left:3px;top:3px"><path d="M2 3 V12 H12 V3" fill="none" stroke="#666" stroke-width="1"/><path d="M7 2 V9 M4.5 6.5 L7 9 L9.5 6.5" fill="none" stroke="#666" stroke-width="1.2"/></svg></div>
<div class="tb" style="left:420px;top:81px;width:20px;height:21px;background:#25282d;border-color:#1a1c1f"><svg width="16" height="16" viewBox="0 0 16 16" style="left:2px;top:2px"><circle cx="8" cy="8" r="6" fill="none" stroke="#555" stroke-width="1.3"/><path d="M4 4 L12 12" stroke="#555" stroke-width="1.3"/></svg></div>
<div class="tb" style="left:450px;top:81px;width:20px;height:21px"><svg width="16" height="16" viewBox="0 0 16 16" style="left:2px;top:2px"><path d="M13 5 A6 6 0 1 1 9.5 2.2" fill="none" stroke="#eee" stroke-width="1.4"/><path d="M5.7 6 A3.2 3.2 0 1 0 10.3 6 M8 4 V8" fill="none" stroke="#eee" stroke-width="1.3"/><path d="M11 1 L14 3 L11 4.5 Z" fill="#eee"/></svg></div>
<div class="tb" style="left:485px;top:81px;width:38px;height:21px"><svg width="36" height="19" viewBox="0 0 36 19" style="left:0px;top:0px"><path d="M3 12.5 A9 9 0 0 1 19.5 10" fill="none" stroke="#eee" stroke-width="1.1"/><path d="M18 8.5 L21.5 10.5 L18 12.5 Z" fill="#eee"/><path d="M8 9 L14 16 M14 9 L8 16" stroke="#eee" stroke-width="1"/><path d="M3 12.5 H20" stroke="#bbb" stroke-width="0.8" stroke-dasharray="1.5 1"/><circle cx="29" cy="9.5" r="5" fill="#0a0a0a"/><circle cx="29" cy="9.5" r="3.2" fill="#6a0808"/></svg></div>
<div style="left:534px;top:82px;width:30px;height:18px"><svg width="30" height="18" viewBox="0 0 30 18"><defs><linearGradient id="kbg" x1="0" y1="0" x2="0" y2="1"><stop offset="0" stop-color="#f4f4f4"/><stop offset="1" stop-color="#c8c8c8"/></linearGradient></defs><path d="M4 2 H26 L29 14 V16 H1 V14 Z" fill="url(#kbg)" stroke="#a0a0a0" stroke-width="0.6"/><path d="M1 14.5 H29" stroke="#999" stroke-width="0.8"/><g fill="#a8a8a8"><rect x="5.5" y="4" width="12" height="1.3"/><rect x="5" y="6.5" width="13" height="1.3"/><rect x="4.5" y="9" width="14" height="1.3"/><rect x="4" y="11.5" width="11" height="1.3"/><rect x="20" y="6.5" width="5" height="1.3"/><rect x="20.5" y="9" width="5" height="1.3"/><rect x="21" y="11.5" width="5" height="1.3"/></g><rect x="20" y="3.5" width="2" height="1.5" fill="#dddd20"/><rect x="23" y="3.5" width="2" height="1.5" fill="#dddd20"/></svg></div>
<div class="tb" style="left:248px;top:81px;width:21px;height:21px"><svg width="16" height="16" viewBox="0 0 16 16" style="left:2px;top:2px"><path d="M4 3 L4 13 M4 4 C7 4 6 10 12 12" fill="none" stroke="#eee" stroke-width="1.2"/><circle cx="4" cy="3" r="1.8" fill="#23262b" stroke="#eee" stroke-width="1"/><circle cx="12" cy="3" r="1.8" fill="#23262b" stroke="#eee" stroke-width="1"/><circle cx="4" cy="13" r="1.8" fill="#23262b" stroke="#eee" stroke-width="1"/><circle cx="12" cy="12" r="1.8" fill="#23262b" stroke="#eee" stroke-width="1"/></svg></div>
<div style="left:187px;top:108px;width:386px;height:431px;overflow:hidden;background:linear-gradient(#2a2d12 0,#6a700f 30px,#6a700f)">
<div style="left:0;top:0;width:386px;height:431px;border-radius:20px 22px 26px 2px;overflow:hidden;background:linear-gradient(90deg,#a8b818 0px,#c4d432 4px,#cddc40 14px,#d2e048 24px,#c4d232 28px,#b8c622 30px,#bfce25 120px,#b9c822 300px,#b4c220 354px,#8e9a10 362px,#3a3f05 374px,#0a0b01 384px)">
<div style="left:0;top:0;width:386px;height:5px;background:linear-gradient(#8e9a12,rgba(0,0,0,0))"></div>
<div style="left:28px;top:7px;width:330px;height:3px;background:#dfea78;opacity:.9"></div>
<div style="left:0;top:398px;width:386px;height:33px;background:linear-gradient(#7e8a10 0,#8a9612 2px,#6e780c 12px,#4a5208 15px,#1c1f03 17px,#121402 25px,#080900 33px)"></div>
<div style="left:356px;top:0;width:30px;height:431px;background:linear-gradient(90deg,rgba(0,0,0,0),rgba(5,6,0,.75) 60%,#040400)"></div>
<div style="left:19px;top:400px;width:6px;height:5px;border-radius:50%;background:#e4f27a;box-shadow:0 0 3px #e4f27a"></div>
</div></div>
<div style="left:220px;top:142px;width:322px;height:113px;background:#121212;border:3px solid #070707;box-shadow:inset 0 0 0 1px #1c1c1c"></div>
<div style="left:242px;top:170px;width:50px;height:52px;background:linear-gradient(#1a1a1a,#0e0e0e);border-radius:3px;box-shadow:inset 0 0 0 1px #1e1e1e"></div>
<div style="left:250px;top:183px;width:33px;height:34px;background:linear-gradient(#282828,#1c1c1c 45%,#161616);border-radius:2px;border:1px solid #0a0a0a"></div>
<div style="left:257px;top:173px;width:16px;height:4px;background:#c81010"></div>
<div style="left:303px;top:170px;width:56px;height:56px;border-radius:50%;background:radial-gradient(circle at 50% 40%,#2c2c2c,#1a1a1a 70%,#202020 100%);box-shadow:0 0 0 1px #0a0a0a"></div>
<div style="left:312px;top:179px;width:38px;height:38px;border-radius:50%;background:radial-gradient(circle at 45% 35%,#313131,#1b1b1b 80%);box-shadow:0 0 0 2px #0b0b0b"></div>
<div style="left:376px;top:170px;width:56px;height:56px;border-radius:50%;background:radial-gradient(circle at 50% 40%,#2c2c2c,#1a1a1a 70%,#202020 100%);box-shadow:0 0 0 1px #0a0a0a"></div>
<div style="left:385px;top:179px;width:38px;height:38px;border-radius:50%;background:radial-gradient(circle at 45% 35%,#313131,#1b1b1b 80%);box-shadow:0 0 0 2px #0b0b0b"></div>
<div style="left:449px;top:170px;width:56px;height:56px;border-radius:50%;background:radial-gradient(circle at 50% 40%,#2c2c2c,#1a1a1a 70%,#202020 100%);box-shadow:0 0 0 1px #0a0a0a"></div>
<div style="left:458px;top:179px;width:38px;height:38px;border-radius:50%;background:radial-gradient(circle at 45% 35%,#313131,#1b1b1b 80%);box-shadow:0 0 0 2px #0b0b0b"></div>
<svg width="400" height="300" style="left:187px;top:108px"><path d="M163 73 L168 68" stroke="#ccc" stroke-width="2.2"/><path d="M236 83 L242 81" stroke="#ccc" stroke-width="2.2"/><path d="M309 81 L315 78" stroke="#ccc" stroke-width="2.2"/></svg>
<div class="t" style="left:230px;top:232px;width:80px;text-align:center;font-size:13px;font-weight:bold;color:#6a6e72">POWER</div>
<div class="t" style="left:291px;top:232px;width:80px;text-align:center;font-size:13px;font-weight:bold;color:#6a6e72">LEVEL</div>
<div class="t" style="left:364px;top:232px;width:80px;text-align:center;font-size:13px;font-weight:bold;color:#6a6e72">TONE</div>
<div class="t" style="left:437px;top:232px;width:80px;text-align:center;font-size:13px;font-weight:bold;color:#6a6e72">DRIVE</div>
<svg width="1128" height="861" style="left:0;top:0"><g fill="#8e9a18"><path d="M262.0 281.9 L262.9 283.3 L263.9 285.2 L265.1 287.6 L266.5 290.1 L268.1 292.9 L269.9 295.6 L271.8 298.3 L273.9 300.8 L276.3 303.1 L278.8 305.3 L281.6 307.4 L284.4 309.5 L287.3 311.5 L290.2 313.5 L293.0 315.4 L295.6 317.4 L298.3 319.4 L301.0 321.4 L303.8 323.5 L306.6 325.6 L309.4 327.6 L312.2 329.5 L315.0 331.3 L317.8 333.0 L320.7 334.4 L323.5 335.6 L326.2 336.5 L328.6 337.3 L330.9 338.1 L333.0 338.9 L334.7 339.7 L336.3 340.7 L337.9 342.0 L339.7 343.7 L341.4 345.7 L343.1 347.8 L344.7 349.9 L346.2 351.9 L347.4 353.6 L348.4 354.8 L355.6 349.2 L354.6 348.0 L353.5 346.4 L352.0 344.4 L350.3 342.2 L348.4 339.8 L346.3 337.5 L344.1 335.3 L341.7 333.3 L339.1 331.7 L336.5 330.5 L334.0 329.5 L331.5 328.7 L329.1 327.9 L326.7 327.1 L324.5 326.1 L322.2 325.0 L319.8 323.6 L317.2 321.9 L314.5 320.2 L311.7 318.3 L308.9 316.4 L306.0 314.4 L303.1 312.5 L300.2 310.6 L297.2 308.9 L294.1 307.1 L291.0 305.5 L288.0 303.8 L285.0 302.2 L282.2 300.6 L279.6 298.9 L277.3 297.2 L275.1 295.3 L272.9 293.2 L270.9 290.8 L268.9 288.5 L267.1 286.2 L265.6 284.2 L264.2 282.4 L263.2 281.1Z"/><path d="M494.0 281.9 L493.1 283.3 L492.1 285.2 L490.9 287.6 L489.5 290.1 L487.9 292.9 L486.1 295.6 L484.2 298.3 L482.1 300.8 L479.7 303.1 L477.2 305.3 L474.4 307.4 L471.6 309.5 L468.7 311.5 L465.8 313.5 L463.0 315.4 L460.4 317.4 L457.7 319.4 L455.0 321.4 L452.2 323.5 L449.4 325.6 L446.6 327.6 L443.8 329.5 L441.0 331.3 L438.2 333.0 L435.3 334.4 L432.5 335.6 L429.8 336.5 L427.4 337.3 L425.1 338.1 L423.0 338.9 L421.3 339.7 L419.7 340.7 L418.1 342.0 L416.3 343.7 L414.6 345.7 L412.9 347.8 L411.3 349.9 L409.8 351.9 L408.6 353.6 L407.6 354.8 L400.4 349.2 L401.4 348.0 L402.5 346.4 L404.0 344.4 L405.7 342.2 L407.6 339.8 L409.7 337.5 L411.9 335.3 L414.3 333.3 L416.9 331.7 L419.5 330.5 L422.0 329.5 L424.5 328.7 L426.9 327.9 L429.3 327.1 L431.5 326.1 L433.8 325.0 L436.2 323.6 L438.8 321.9 L441.5 320.2 L444.3 318.3 L447.1 316.4 L450.0 314.4 L452.9 312.5 L455.8 310.6 L458.8 308.9 L461.9 307.1 L465.0 305.5 L468.0 303.8 L471.0 302.2 L473.8 300.6 L476.4 298.9 L478.7 297.2 L480.9 295.3 L483.1 293.2 L485.1 290.8 L487.1 288.5 L488.9 286.2 L490.4 284.2 L491.8 282.4 L492.8 281.1Z"/><path d="M246.3 296.8 L247.3 298.1 L248.4 299.8 L249.8 302.0 L251.3 304.3 L253.1 306.8 L255.0 309.3 L257.1 311.7 L259.3 313.8 L261.7 315.7 L264.3 317.5 L267.0 319.2 L269.8 320.8 L272.7 322.3 L275.6 323.8 L278.6 325.2 L281.6 326.6 L284.7 328.0 L287.9 329.4 L291.2 330.6 L294.5 331.9 L297.8 333.0 L301.2 334.2 L304.5 335.3 L307.8 336.3 L311.3 337.4 L315.0 338.5 L318.8 339.6 L322.6 340.6 L326.1 341.6 L329.3 342.5 L332.0 343.2 L334.0 343.8 L336.0 336.2 L334.0 335.7 L331.4 335.0 L328.2 334.1 L324.7 333.1 L321.0 332.1 L317.2 331.0 L313.6 329.9 L310.2 328.9 L306.9 327.8 L303.6 326.8 L300.3 325.6 L297.1 324.5 L293.8 323.4 L290.6 322.3 L287.5 321.1 L284.4 320.0 L281.4 318.8 L278.3 317.6 L275.3 316.5 L272.4 315.3 L269.6 314.1 L266.9 312.9 L264.4 311.6 L262.1 310.2 L259.8 308.6 L257.6 306.8 L255.4 304.8 L253.4 302.7 L251.5 300.6 L249.8 298.8 L248.4 297.2 L247.3 296.0Z"/><path d="M509.7 296.8 L508.7 298.1 L507.6 299.8 L506.2 302.0 L504.7 304.3 L502.9 306.8 L501.0 309.3 L498.9 311.7 L496.7 313.8 L494.3 315.7 L491.7 317.5 L489.0 319.2 L486.2 320.8 L483.3 322.3 L480.4 323.8 L477.4 325.2 L474.4 326.6 L471.3 328.0 L468.1 329.4 L464.8 330.6 L461.5 331.9 L458.2 333.0 L454.8 334.2 L451.5 335.3 L448.2 336.3 L444.7 337.4 L441.0 338.5 L437.2 339.6 L433.4 340.6 L429.9 341.6 L426.7 342.5 L424.0 343.2 L422.0 343.8 L420.0 336.2 L422.0 335.7 L424.6 335.0 L427.8 334.1 L431.3 333.1 L435.0 332.1 L438.8 331.0 L442.4 329.9 L445.8 328.9 L449.1 327.8 L452.4 326.8 L455.7 325.6 L458.9 324.5 L462.2 323.4 L465.4 322.3 L468.5 321.1 L471.6 320.0 L474.6 318.8 L477.7 317.6 L480.7 316.5 L483.6 315.3 L486.4 314.1 L489.1 312.9 L491.6 311.6 L493.9 310.2 L496.2 308.6 L498.4 306.8 L500.6 304.8 L502.6 302.7 L504.5 300.6 L506.2 298.8 L507.6 297.2 L508.7 296.0Z"/><path d="M212.0 310.3 L213.5 311.1 L215.4 312.1 L217.6 313.4 L220.2 314.7 L223.0 316.2 L225.9 317.6 L229.0 319.0 L232.1 320.2 L235.2 321.3 L238.5 322.3 L241.9 323.2 L245.4 324.0 L248.9 324.9 L252.5 325.7 L256.0 326.6 L259.5 327.5 L263.2 328.6 L267.1 329.7 L271.1 330.8 L275.2 332.0 L279.2 333.1 L283.1 334.2 L286.9 335.2 L290.5 336.3 L293.9 337.2 L297.2 338.2 L300.5 339.2 L303.5 340.2 L306.4 341.1 L309.2 342.1 L311.7 343.1 L313.9 344.0 L315.9 344.9 L317.8 345.9 L319.6 346.9 L321.2 348.0 L322.8 349.0 L324.2 349.9 L325.4 350.8 L326.5 351.5 L333.5 340.5 L332.6 340.0 L331.5 339.2 L330.0 338.2 L328.3 337.0 L326.3 335.8 L324.1 334.5 L321.7 333.2 L319.1 332.0 L316.4 330.9 L313.6 329.9 L310.6 328.9 L307.5 327.8 L304.3 326.8 L301.0 325.8 L297.6 324.8 L294.1 323.7 L290.4 322.7 L286.5 321.7 L282.5 320.6 L278.3 319.6 L274.1 318.7 L269.9 317.9 L265.8 317.1 L261.9 316.5 L258.0 315.9 L254.2 315.5 L250.4 315.2 L246.8 314.9 L243.3 314.7 L240.0 314.4 L236.8 314.1 L233.7 313.8 L230.7 313.2 L227.7 312.6 L224.6 311.8 L221.7 311.0 L218.9 310.3 L216.5 309.5 L214.4 308.9 L212.8 308.5Z"/><path d="M544.0 310.3 L542.5 311.1 L540.6 312.1 L538.4 313.4 L535.8 314.7 L533.0 316.2 L530.1 317.6 L527.0 319.0 L523.9 320.2 L520.8 321.3 L517.5 322.3 L514.1 323.2 L510.6 324.0 L507.1 324.9 L503.5 325.7 L500.0 326.6 L496.5 327.5 L492.8 328.6 L488.9 329.7 L484.9 330.8 L480.8 332.0 L476.8 333.1 L472.9 334.2 L469.1 335.2 L465.5 336.3 L462.1 337.2 L458.8 338.2 L455.5 339.2 L452.5 340.2 L449.6 341.1 L446.8 342.1 L444.3 343.1 L442.1 344.0 L440.1 344.9 L438.2 345.9 L436.4 346.9 L434.8 348.0 L433.2 349.0 L431.8 349.9 L430.6 350.8 L429.5 351.5 L422.5 340.5 L423.4 340.0 L424.5 339.2 L426.0 338.2 L427.7 337.0 L429.7 335.8 L431.9 334.5 L434.3 333.2 L436.9 332.0 L439.6 330.9 L442.4 329.9 L445.4 328.9 L448.5 327.8 L451.7 326.8 L455.0 325.8 L458.4 324.8 L461.9 323.7 L465.6 322.7 L469.5 321.7 L473.5 320.6 L477.7 319.6 L481.9 318.7 L486.1 317.9 L490.2 317.1 L494.1 316.5 L498.0 315.9 L501.8 315.5 L505.6 315.2 L509.2 314.9 L512.7 314.7 L516.0 314.4 L519.2 314.1 L522.3 313.8 L525.3 313.2 L528.3 312.6 L531.4 311.8 L534.3 311.0 L537.1 310.3 L539.5 309.5 L541.6 308.9 L543.2 308.5Z"/><path d="M222.4 337.2 L223.8 337.8 L225.5 338.5 L227.7 339.3 L230.1 340.2 L232.7 341.2 L235.5 342.2 L238.4 343.3 L241.3 344.3 L244.3 345.2 L247.6 346.3 L251.0 347.3 L254.6 348.3 L258.2 349.3 L261.8 350.3 L265.4 351.3 L268.9 352.2 L272.4 353.1 L276.0 353.9 L279.6 354.7 L283.2 355.5 L286.7 356.2 L290.1 356.9 L293.4 357.6 L296.5 358.3 L299.5 359.1 L302.5 359.8 L305.4 360.6 L308.2 361.4 L310.8 362.2 L313.2 363.0 L315.5 363.8 L317.5 364.6 L319.2 365.4 L320.8 366.2 L322.3 367.1 L323.7 368.1 L325.0 369.0 L326.3 369.9 L327.4 370.7 L328.4 371.4 L335.6 360.6 L334.9 360.1 L333.9 359.4 L332.6 358.5 L331.0 357.3 L329.2 356.1 L327.2 354.9 L324.9 353.7 L322.5 352.6 L320.0 351.6 L317.4 350.7 L314.7 349.8 L311.8 348.9 L308.9 348.1 L305.8 347.3 L302.7 346.5 L299.5 345.7 L296.2 344.9 L292.7 344.2 L289.2 343.5 L285.6 342.9 L281.9 342.3 L278.3 341.8 L274.7 341.3 L271.1 340.8 L267.5 340.3 L263.8 339.9 L260.1 339.5 L256.4 339.1 L252.7 338.7 L249.2 338.4 L245.8 338.1 L242.7 337.7 L239.7 337.4 L236.7 337.1 L233.8 336.7 L231.0 336.4 L228.5 336.1 L226.2 335.8 L224.3 335.5 L222.8 335.4Z"/><path d="M533.6 337.2 L532.2 337.8 L530.5 338.5 L528.3 339.3 L525.9 340.2 L523.3 341.2 L520.5 342.2 L517.6 343.3 L514.7 344.3 L511.7 345.2 L508.4 346.3 L505.0 347.3 L501.4 348.3 L497.8 349.3 L494.2 350.3 L490.6 351.3 L487.1 352.2 L483.6 353.1 L480.0 353.9 L476.4 354.7 L472.8 355.5 L469.3 356.2 L465.9 356.9 L462.6 357.6 L459.5 358.3 L456.5 359.1 L453.5 359.8 L450.6 360.6 L447.8 361.4 L445.2 362.2 L442.8 363.0 L440.5 363.8 L438.5 364.6 L436.8 365.4 L435.2 366.2 L433.7 367.1 L432.3 368.1 L431.0 369.0 L429.7 369.9 L428.6 370.7 L427.6 371.4 L420.4 360.6 L421.1 360.1 L422.1 359.4 L423.4 358.5 L425.0 357.3 L426.8 356.1 L428.8 354.9 L431.1 353.7 L433.5 352.6 L436.0 351.6 L438.6 350.7 L441.3 349.8 L444.2 348.9 L447.1 348.1 L450.2 347.3 L453.3 346.5 L456.5 345.7 L459.8 344.9 L463.3 344.2 L466.8 343.5 L470.4 342.9 L474.1 342.3 L477.7 341.8 L481.3 341.3 L484.9 340.8 L488.5 340.3 L492.2 339.9 L495.9 339.5 L499.6 339.1 L503.3 338.7 L506.8 338.4 L510.2 338.1 L513.3 337.7 L516.3 337.4 L519.3 337.1 L522.2 336.7 L525.0 336.4 L527.5 336.1 L529.8 335.8 L531.7 335.5 L533.2 335.4Z"/><path d="M249.4 363.0 L250.9 363.8 L252.9 364.7 L255.3 365.8 L257.9 367.1 L260.7 368.4 L263.6 369.6 L266.5 370.8 L269.1 371.8 L271.6 372.6 L274.2 373.5 L276.8 374.3 L279.4 375.1 L282.0 375.7 L284.7 376.2 L287.3 376.6 L289.8 376.8 L292.2 376.8 L294.6 376.7 L296.9 376.5 L299.1 376.2 L301.3 375.8 L303.4 375.2 L305.4 374.5 L307.5 373.6 L309.5 372.3 L311.3 370.7 L312.8 369.1 L314.1 367.5 L315.2 366.0 L316.0 364.7 L316.6 363.8 L317.1 363.2 L308.9 356.8 L308.2 357.7 L307.4 358.8 L306.6 360.0 L305.8 361.2 L304.9 362.3 L304.0 363.3 L303.3 364.0 L302.5 364.4 L301.6 364.8 L300.3 365.3 L298.9 365.7 L297.4 366.0 L295.7 366.2 L293.9 366.3 L292.1 366.4 L290.2 366.4 L288.2 366.3 L286.1 366.1 L283.7 365.9 L281.3 365.6 L278.7 365.2 L276.1 364.9 L273.5 364.6 L270.9 364.2 L268.2 363.9 L265.3 363.6 L262.2 363.2 L259.2 362.8 L256.3 362.4 L253.7 362.0 L251.5 361.8 L249.8 361.6Z"/><path d="M506.6 363.0 L505.1 363.8 L503.1 364.7 L500.7 365.8 L498.1 367.1 L495.3 368.4 L492.4 369.6 L489.5 370.8 L486.9 371.8 L484.4 372.6 L481.8 373.5 L479.2 374.3 L476.6 375.1 L474.0 375.7 L471.3 376.2 L468.7 376.6 L466.2 376.8 L463.8 376.8 L461.4 376.7 L459.1 376.5 L456.9 376.2 L454.7 375.8 L452.6 375.2 L450.6 374.5 L448.5 373.6 L446.5 372.3 L444.7 370.7 L443.2 369.1 L441.9 367.5 L440.8 366.0 L440.0 364.7 L439.4 363.8 L438.9 363.2 L447.1 356.8 L447.8 357.7 L448.6 358.8 L449.4 360.0 L450.2 361.2 L451.1 362.3 L452.0 363.3 L452.7 364.0 L453.5 364.4 L454.4 364.8 L455.7 365.3 L457.1 365.7 L458.6 366.0 L460.3 366.2 L462.1 366.3 L463.9 366.4 L465.8 366.4 L467.8 366.3 L469.9 366.1 L472.3 365.9 L474.7 365.6 L477.3 365.2 L479.9 364.9 L482.5 364.6 L485.1 364.2 L487.8 363.9 L490.7 363.6 L493.8 363.2 L496.8 362.8 L499.7 362.4 L502.3 362.0 L504.5 361.8 L506.2 361.6Z"/><path d="M266.1 387.2 L267.5 387.8 L269.3 388.8 L271.4 389.9 L273.9 391.1 L276.5 392.3 L279.3 393.4 L282.1 394.2 L284.9 394.7 L287.7 394.9 L290.4 394.8 L293.1 394.5 L295.8 394.0 L298.5 393.4 L301.0 392.5 L303.4 391.6 L305.7 390.5 L307.9 389.1 L310.0 387.5 L311.8 385.7 L313.3 384.0 L314.7 382.3 L315.9 380.9 L316.7 379.8 L317.4 379.0 L310.6 373.0 L309.8 373.9 L308.7 375.2 L307.7 376.6 L306.5 378.0 L305.2 379.4 L303.9 380.7 L302.6 381.7 L301.3 382.5 L299.8 383.2 L297.9 384.0 L295.8 384.7 L293.7 385.3 L291.5 386.0 L289.3 386.5 L287.1 386.9 L285.1 387.3 L282.9 387.4 L280.5 387.4 L277.8 387.2 L275.1 386.9 L272.5 386.6 L270.1 386.3 L268.0 386.0 L266.5 385.8Z"/><path d="M489.9 387.2 L488.5 387.8 L486.7 388.8 L484.6 389.9 L482.1 391.1 L479.5 392.3 L476.7 393.4 L473.9 394.2 L471.1 394.7 L468.3 394.9 L465.6 394.8 L462.9 394.5 L460.2 394.0 L457.5 393.4 L455.0 392.5 L452.6 391.6 L450.3 390.5 L448.1 389.1 L446.0 387.5 L444.2 385.7 L442.7 384.0 L441.3 382.3 L440.1 380.9 L439.3 379.8 L438.6 379.0 L445.4 373.0 L446.2 373.9 L447.3 375.2 L448.3 376.6 L449.5 378.0 L450.8 379.4 L452.1 380.7 L453.4 381.7 L454.7 382.5 L456.2 383.2 L458.1 384.0 L460.2 384.7 L462.3 385.3 L464.5 386.0 L466.7 386.5 L468.9 386.9 L470.9 387.3 L473.1 387.4 L475.5 387.4 L478.2 387.2 L480.9 386.9 L483.5 386.6 L485.9 386.3 L488.0 386.0 L489.5 385.8Z"/><path d="M279.3 409.5 L280.7 409.8 L282.7 410.3 L285.0 411.0 L287.6 411.6 L290.4 412.1 L293.3 412.5 L296.1 412.7 L298.8 412.6 L301.3 412.1 L303.7 411.5 L306.0 410.7 L308.1 409.7 L310.2 408.5 L312.1 407.3 L313.8 406.1 L315.6 404.8 L317.3 403.4 L318.8 401.7 L320.2 400.0 L321.5 398.3 L322.5 396.8 L323.4 395.5 L324.1 394.4 L324.7 393.7 L317.3 388.3 L316.7 389.2 L315.9 390.4 L315.0 391.7 L314.1 393.0 L313.1 394.4 L312.0 395.7 L310.9 396.8 L309.8 397.8 L308.5 398.7 L307.1 399.8 L305.5 400.8 L303.9 401.7 L302.2 402.7 L300.5 403.5 L298.9 404.3 L297.2 405.0 L295.3 405.6 L293.1 406.1 L290.5 406.6 L287.8 407.0 L285.2 407.3 L282.8 407.6 L280.8 407.9 L279.3 408.1Z"/><path d="M476.7 409.5 L475.3 409.8 L473.3 410.3 L471.0 411.0 L468.4 411.6 L465.6 412.1 L462.7 412.5 L459.9 412.7 L457.2 412.6 L454.7 412.1 L452.3 411.5 L450.0 410.7 L447.9 409.7 L445.8 408.5 L443.9 407.3 L442.2 406.1 L440.4 404.8 L438.7 403.4 L437.2 401.7 L435.8 400.0 L434.5 398.3 L433.5 396.8 L432.6 395.5 L431.9 394.4 L431.3 393.7 L438.7 388.3 L439.3 389.2 L440.1 390.4 L441.0 391.7 L441.9 393.0 L442.9 394.4 L444.0 395.7 L445.1 396.8 L446.2 397.8 L447.5 398.7 L448.9 399.8 L450.5 400.8 L452.1 401.7 L453.8 402.7 L455.5 403.5 L457.1 404.3 L458.8 405.0 L460.7 405.6 L462.9 406.1 L465.5 406.6 L468.2 407.0 L470.8 407.3 L473.2 407.6 L475.2 407.9 L476.7 408.1Z"/><path d="M298.0 422.4 L299.0 422.5 L300.4 422.7 L302.2 423.0 L304.1 423.2 L306.1 423.4 L308.2 423.4 L310.2 423.4 L312.0 423.1 L313.7 422.6 L315.2 422.1 L316.7 421.4 L318.1 420.7 L319.4 419.8 L320.6 418.8 L321.8 417.8 L322.9 416.6 L324.0 415.2 L325.1 413.7 L326.1 412.1 L327.0 410.5 L327.8 409.0 L328.5 407.7 L329.0 406.6 L329.4 405.9 L322.6 402.1 L322.1 403.0 L321.5 404.1 L320.9 405.4 L320.1 406.8 L319.4 408.1 L318.6 409.4 L317.8 410.5 L317.1 411.4 L316.3 412.2 L315.5 412.9 L314.7 413.7 L313.8 414.4 L312.9 415.0 L312.0 415.7 L311.0 416.3 L310.0 416.9 L308.8 417.5 L307.3 418.1 L305.5 418.7 L303.7 419.3 L301.9 419.9 L300.3 420.4 L298.9 420.9 L297.8 421.2Z"/><path d="M458.0 422.4 L457.0 422.5 L455.6 422.7 L453.8 423.0 L451.9 423.2 L449.9 423.4 L447.8 423.4 L445.8 423.4 L444.0 423.1 L442.3 422.6 L440.8 422.1 L439.3 421.4 L437.9 420.7 L436.6 419.8 L435.4 418.8 L434.2 417.8 L433.1 416.6 L432.0 415.2 L430.9 413.7 L429.9 412.1 L429.0 410.5 L428.2 409.0 L427.5 407.7 L427.0 406.6 L426.6 405.9 L433.4 402.1 L433.9 403.0 L434.5 404.1 L435.1 405.4 L435.9 406.8 L436.6 408.1 L437.4 409.4 L438.2 410.5 L438.9 411.4 L439.7 412.2 L440.5 412.9 L441.3 413.7 L442.2 414.4 L443.1 415.0 L444.0 415.7 L445.0 416.3 L446.0 416.9 L447.2 417.5 L448.7 418.1 L450.5 418.7 L452.3 419.3 L454.1 419.9 L455.7 420.4 L457.1 420.9 L458.2 421.2Z"/><path d="M315.9 360.2 L316.3 361.7 L316.8 363.6 L317.5 365.9 L318.2 368.4 L319.1 371.1 L319.9 374.0 L320.8 377.0 L321.8 379.9 L322.8 382.9 L323.8 386.1 L325.0 389.3 L326.2 392.7 L327.4 396.1 L328.7 399.5 L329.9 403.0 L331.2 406.5 L332.5 410.1 L333.8 413.7 L335.2 417.3 L336.6 421.0 L338.0 424.6 L339.3 428.3 L340.6 432.1 L341.7 435.9 L342.7 439.9 L343.7 444.2 L344.5 448.8 L345.4 453.5 L346.3 458.2 L347.2 462.7 L348.3 466.9 L349.5 470.7 L351.0 474.2 L352.6 477.4 L354.4 480.3 L356.1 482.9 L357.8 485.3 L359.2 487.3 L360.5 489.0 L361.4 490.3 L362.6 489.7 L361.9 488.1 L361.0 486.2 L359.9 484.0 L358.7 481.5 L357.4 478.7 L356.3 475.7 L355.3 472.6 L354.5 469.3 L353.9 465.7 L353.4 461.6 L353.1 457.2 L352.7 452.5 L352.4 447.7 L351.9 442.9 L351.2 438.2 L350.3 433.7 L349.2 429.5 L347.9 425.4 L346.5 421.5 L345.0 417.7 L343.5 414.0 L341.9 410.4 L340.4 406.9 L338.8 403.5 L337.3 400.0 L335.7 396.6 L334.0 393.3 L332.4 390.0 L330.7 386.8 L329.2 383.8 L327.6 380.9 L326.2 378.1 L324.9 375.3 L323.5 372.6 L322.1 369.9 L320.9 367.4 L319.7 365.0 L318.7 362.9 L317.8 361.1 L317.1 359.8Z"/><path d="M440.1 360.2 L439.7 361.7 L439.2 363.6 L438.5 365.9 L437.8 368.4 L436.9 371.1 L436.1 374.0 L435.2 377.0 L434.2 379.9 L433.2 382.9 L432.2 386.1 L431.0 389.3 L429.8 392.7 L428.6 396.1 L427.3 399.5 L426.1 403.0 L424.8 406.5 L423.5 410.1 L422.2 413.7 L420.8 417.3 L419.4 421.0 L418.0 424.6 L416.7 428.3 L415.4 432.1 L414.3 435.9 L413.3 439.9 L412.3 444.2 L411.5 448.8 L410.6 453.5 L409.7 458.2 L408.8 462.7 L407.7 466.9 L406.5 470.7 L405.0 474.2 L403.4 477.4 L401.6 480.3 L399.9 482.9 L398.2 485.3 L396.8 487.3 L395.5 489.0 L394.6 490.3 L393.4 489.7 L394.1 488.1 L395.0 486.2 L396.1 484.0 L397.3 481.5 L398.6 478.7 L399.7 475.7 L400.7 472.6 L401.5 469.3 L402.1 465.7 L402.6 461.6 L402.9 457.2 L403.3 452.5 L403.6 447.7 L404.1 442.9 L404.8 438.2 L405.7 433.7 L406.8 429.5 L408.1 425.4 L409.5 421.5 L411.0 417.7 L412.5 414.0 L414.1 410.4 L415.6 406.9 L417.2 403.5 L418.7 400.0 L420.3 396.6 L422.0 393.3 L423.6 390.0 L425.3 386.8 L426.8 383.8 L428.4 380.9 L429.8 378.1 L431.1 375.3 L432.5 372.6 L433.9 369.9 L435.1 367.4 L436.3 365.0 L437.3 362.9 L438.2 361.1 L438.9 359.8Z"/><path d="M334.4 366.3 L335.4 368.5 L336.8 371.3 L338.4 374.6 L340.2 378.4 L342.1 382.4 L343.9 386.6 L345.6 390.9 L347.0 395.2 L348.3 399.6 L349.5 404.5 L350.8 409.7 L352.0 415.0 L353.2 420.4 L354.4 425.7 L355.5 430.9 L356.6 435.7 L357.5 440.3 L358.4 444.8 L359.2 449.2 L359.9 453.6 L360.6 457.9 L361.4 462.1 L362.1 466.3 L362.9 470.4 L363.8 474.6 L364.7 478.9 L365.6 483.2 L366.5 487.4 L367.4 491.4 L368.2 494.9 L368.8 497.8 L369.3 500.1 L370.7 499.9 L370.6 497.6 L370.4 494.6 L370.3 491.0 L370.1 487.0 L369.9 482.7 L369.6 478.2 L369.4 473.8 L369.1 469.6 L368.8 465.5 L368.6 461.3 L368.3 457.0 L368.0 452.6 L367.6 448.1 L367.0 443.4 L366.3 438.7 L365.4 433.9 L364.4 428.9 L363.2 423.7 L361.8 418.3 L360.2 412.9 L358.6 407.5 L356.8 402.3 L354.9 397.4 L353.0 392.8 L350.9 388.5 L348.5 384.3 L345.9 380.3 L343.4 376.5 L341.0 373.1 L338.8 370.1 L337.0 367.6 L335.6 365.7Z"/><path d="M421.6 366.3 L420.6 368.5 L419.2 371.3 L417.6 374.6 L415.8 378.4 L413.9 382.4 L412.1 386.6 L410.4 390.9 L409.0 395.2 L407.7 399.6 L406.5 404.5 L405.2 409.7 L404.0 415.0 L402.8 420.4 L401.6 425.7 L400.5 430.9 L399.4 435.7 L398.5 440.3 L397.6 444.8 L396.8 449.2 L396.1 453.6 L395.4 457.9 L394.6 462.1 L393.9 466.3 L393.1 470.4 L392.2 474.6 L391.3 478.9 L390.4 483.2 L389.5 487.4 L388.6 491.4 L387.8 494.9 L387.2 497.8 L386.7 500.1 L385.3 499.9 L385.4 497.6 L385.6 494.6 L385.7 491.0 L385.9 487.0 L386.1 482.7 L386.4 478.2 L386.6 473.8 L386.9 469.6 L387.2 465.5 L387.4 461.3 L387.7 457.0 L388.0 452.6 L388.4 448.1 L389.0 443.4 L389.7 438.7 L390.6 433.9 L391.6 428.9 L392.8 423.7 L394.2 418.3 L395.8 412.9 L397.4 407.5 L399.2 402.3 L401.1 397.4 L403.0 392.8 L405.1 388.5 L407.5 384.3 L410.1 380.3 L412.6 376.5 L415.0 373.1 L417.2 370.1 L419.0 367.6 L420.4 365.7Z"/><path d="M319.3 320.1 L321.0 322.6 L323.4 325.9 L326.2 329.8 L329.3 334.2 L332.6 338.8 L335.8 343.5 L338.8 348.1 L341.4 352.5 L343.8 356.7 L346.2 361.2 L348.5 365.9 L350.8 370.6 L353.0 375.2 L355.2 379.7 L357.4 384.0 L359.5 388.1 L361.4 391.7 L363.2 395.0 L364.9 398.0 L366.5 400.9 L368.0 403.6 L369.5 406.5 L371.1 409.4 L372.8 412.6 L374.6 416.1 L376.4 419.6 L378.3 423.3 L380.2 427.0 L382.1 430.7 L383.9 434.4 L385.7 438.1 L387.3 441.7 L388.8 445.3 L390.3 449.2 L391.6 453.2 L393.0 457.2 L394.3 461.1 L395.6 464.9 L396.8 468.4 L398.1 471.5 L399.4 474.3 L400.8 476.8 L402.1 479.0 L403.4 481.0 L404.6 482.7 L405.6 484.2 L406.5 485.5 L407.1 486.5 L408.9 485.5 L408.4 484.4 L407.7 483.0 L407.0 481.4 L406.2 479.5 L405.3 477.4 L404.4 475.1 L403.6 472.6 L402.9 469.9 L402.2 466.8 L401.6 463.3 L400.9 459.5 L400.3 455.4 L399.6 451.1 L398.7 446.8 L397.8 442.5 L396.7 438.3 L395.4 434.3 L394.0 430.2 L392.5 426.1 L390.9 422.1 L389.2 418.1 L387.6 414.3 L385.9 410.6 L384.2 407.0 L382.6 403.6 L381.0 400.4 L379.4 397.5 L377.8 394.5 L376.2 391.6 L374.5 388.6 L372.6 385.4 L370.5 381.9 L368.3 378.1 L365.9 374.0 L363.3 369.6 L360.6 365.2 L357.8 360.6 L354.8 356.1 L351.7 351.7 L348.6 347.5 L345.1 343.4 L341.3 339.2 L337.2 335.0 L333.2 330.9 L329.3 327.2 L325.8 323.8 L322.9 321.0 L320.7 318.9Z"/><path d="M436.7 320.1 L435.0 322.6 L432.6 325.9 L429.8 329.8 L426.7 334.2 L423.4 338.8 L420.2 343.5 L417.2 348.1 L414.6 352.5 L412.2 356.7 L409.8 361.2 L407.5 365.9 L405.2 370.6 L403.0 375.2 L400.8 379.7 L398.6 384.0 L396.5 388.1 L394.6 391.7 L392.8 395.0 L391.1 398.0 L389.5 400.9 L388.0 403.6 L386.5 406.5 L384.9 409.4 L383.2 412.6 L381.4 416.1 L379.6 419.6 L377.7 423.3 L375.8 427.0 L373.9 430.7 L372.1 434.4 L370.3 438.1 L368.7 441.7 L367.2 445.3 L365.7 449.2 L364.4 453.2 L363.0 457.2 L361.7 461.1 L360.4 464.9 L359.2 468.4 L357.9 471.5 L356.6 474.3 L355.2 476.8 L353.9 479.0 L352.6 481.0 L351.4 482.7 L350.4 484.2 L349.5 485.5 L348.9 486.5 L347.1 485.5 L347.6 484.4 L348.3 483.0 L349.0 481.4 L349.8 479.5 L350.7 477.4 L351.6 475.1 L352.4 472.6 L353.1 469.9 L353.8 466.8 L354.4 463.3 L355.1 459.5 L355.7 455.4 L356.4 451.1 L357.3 446.8 L358.2 442.5 L359.3 438.3 L360.6 434.3 L362.0 430.2 L363.5 426.1 L365.1 422.1 L366.8 418.1 L368.4 414.3 L370.1 410.6 L371.8 407.0 L373.4 403.6 L375.0 400.4 L376.6 397.5 L378.2 394.5 L379.8 391.6 L381.5 388.6 L383.4 385.4 L385.5 381.9 L387.7 378.1 L390.1 374.0 L392.7 369.6 L395.4 365.2 L398.2 360.6 L401.2 356.1 L404.3 351.7 L407.4 347.5 L410.9 343.4 L414.7 339.2 L418.8 335.0 L422.8 330.9 L426.7 327.2 L430.2 323.8 L433.1 321.0 L435.3 318.9Z"/><path d="M331.5 435.9 L330.7 437.7 L329.6 440.1 L328.2 442.9 L326.8 446.2 L325.6 449.6 L324.6 453.2 L324.0 456.7 L323.8 460.0 L324.1 463.2 L324.9 466.3 L325.9 469.3 L327.2 472.1 L328.5 474.7 L329.7 476.9 L330.8 478.7 L331.5 480.1 L332.5 479.9 L332.3 478.2 L332.0 476.1 L331.6 473.6 L331.2 470.9 L330.8 468.0 L330.5 465.2 L330.3 462.5 L330.2 460.0 L330.4 457.4 L330.7 454.3 L331.1 450.8 L331.5 447.3 L331.9 443.9 L332.2 440.8 L332.4 438.1 L332.5 436.1Z"/><path d="M424.5 435.9 L425.3 437.7 L426.4 440.1 L427.8 442.9 L429.2 446.2 L430.4 449.6 L431.4 453.2 L432.0 456.7 L432.2 460.0 L431.9 463.2 L431.1 466.3 L430.1 469.3 L428.8 472.1 L427.5 474.7 L426.3 476.9 L425.2 478.7 L424.5 480.1 L423.5 479.9 L423.7 478.2 L424.0 476.1 L424.4 473.6 L424.8 470.9 L425.2 468.0 L425.5 465.2 L425.7 462.5 L425.8 460.0 L425.6 457.4 L425.3 454.3 L424.9 450.8 L424.5 447.3 L424.1 443.9 L423.8 440.8 L423.6 438.1 L423.5 436.1Z"/><path d="M338.4 321.5 L339.3 321.0 L340.4 320.4 L341.8 319.5 L343.3 318.7 L344.8 317.8 L346.3 317.0 L347.7 316.4 L348.9 316.0 L349.9 315.7 L350.8 315.6 L351.5 315.5 L352.2 315.5 L353.0 315.6 L354.0 315.7 L355.2 315.9 L356.8 316.2 L358.6 316.5 L360.8 316.9 L363.1 317.3 L365.5 317.7 L367.9 318.3 L370.3 318.8 L372.6 319.4 L374.6 320.1 L376.6 320.9 L378.5 321.8 L380.6 322.8 L382.6 323.9 L384.7 325.0 L386.8 326.2 L388.9 327.3 L391.1 328.4 L393.2 329.4 L395.2 330.4 L397.3 331.3 L399.3 332.3 L401.3 333.2 L403.2 334.1 L405.0 335.0 L406.7 335.9 L408.4 336.7 L410.0 337.7 L411.6 338.6 L413.1 339.6 L414.5 340.5 L415.7 341.3 L416.8 342.0 L417.6 342.5 L418.4 341.5 L417.8 340.8 L416.9 339.9 L415.9 338.8 L414.8 337.5 L413.5 336.2 L412.2 334.8 L410.8 333.5 L409.3 332.1 L407.7 330.8 L406.1 329.5 L404.4 328.2 L402.5 326.9 L400.7 325.5 L398.8 324.2 L396.8 322.9 L394.9 321.6 L393.0 320.4 L391.1 319.1 L389.0 317.7 L386.9 316.4 L384.7 315.1 L382.3 313.9 L379.9 312.8 L377.4 311.9 L374.7 311.2 L372.0 310.6 L369.2 310.3 L366.5 310.0 L363.9 309.9 L361.4 309.8 L359.2 309.8 L357.2 309.8 L355.6 309.9 L354.2 309.9 L352.9 310.1 L351.7 310.2 L350.5 310.5 L349.4 310.9 L348.3 311.4 L347.1 312.0 L345.7 312.9 L344.3 314.0 L343.0 315.2 L341.6 316.5 L340.4 317.7 L339.2 318.9 L338.3 319.8 L337.6 320.5Z"/><path d="M346.4 322.3 L346.9 323.6 L347.6 325.5 L348.5 327.6 L349.6 329.9 L350.7 332.2 L351.8 334.4 L352.9 336.3 L353.8 337.9 L354.6 339.2 L355.3 340.8 L355.9 342.4 L356.6 344.0 L357.2 345.5 L357.7 346.9 L358.1 348.1 L358.5 349.1 L359.5 348.9 L359.6 348.0 L359.8 346.7 L360.0 345.2 L360.3 343.5 L360.4 341.6 L360.3 339.5 L360.0 337.4 L359.4 335.3 L358.4 333.2 L357.0 331.1 L355.4 329.0 L353.5 327.1 L351.6 325.4 L349.8 323.9 L348.3 322.6 L347.2 321.7Z"/><path d="M368.8 327.4 L369.8 328.1 L371.0 329.0 L372.5 330.1 L374.2 331.2 L376.0 332.5 L377.8 333.8 L379.5 335.1 L381.3 336.5 L383.2 338.0 L385.4 339.9 L388.0 341.8 L390.7 343.8 L393.4 345.5 L395.9 347.1 L398.1 348.4 L399.7 349.3 L400.3 348.7 L399.3 347.2 L397.8 345.1 L396.1 342.7 L394.0 340.1 L391.8 337.6 L389.4 335.2 L387.0 333.2 L384.7 331.5 L382.5 330.3 L380.2 329.3 L377.9 328.5 L375.7 327.9 L373.6 327.5 L371.9 327.1 L370.3 326.8 L369.2 326.6Z"/><path d="M361.1 349.2 L361.5 350.6 L362.0 352.5 L362.7 354.7 L363.5 357.2 L364.3 359.7 L365.1 362.3 L365.9 364.8 L366.7 367.0 L367.4 369.1 L368.1 371.5 L368.8 374.1 L369.6 376.6 L370.5 378.9 L371.5 381.0 L373.0 382.9 L376.1 384.1 L379.0 382.9 L380.5 381.0 L381.6 378.8 L382.6 376.3 L383.5 373.8 L384.4 371.2 L385.1 368.9 L385.8 367.0 L386.6 365.2 L387.4 363.3 L388.2 361.5 L389.0 359.7 L389.8 358.0 L390.4 356.5 L391.0 355.2 L391.4 354.2 L390.6 353.8 L390.0 354.6 L389.1 355.7 L388.1 357.0 L387.0 358.5 L385.8 360.0 L384.5 361.7 L383.3 363.3 L382.2 365.0 L381.0 367.0 L379.7 369.3 L378.5 371.7 L377.4 374.0 L376.3 376.1 L375.4 377.6 L374.9 378.2 L375.9 377.9 L377.1 378.2 L376.9 377.8 L376.2 376.4 L375.3 374.4 L374.4 372.1 L373.4 369.7 L372.4 367.2 L371.3 365.0 L370.1 362.9 L368.9 360.7 L367.5 358.3 L366.2 356.0 L364.9 353.7 L363.7 351.7 L362.7 350.1 L361.9 348.8Z"/><path d="M377.6 404.9 L377.1 406.8 L376.6 409.3 L375.9 412.2 L375.2 415.5 L374.4 419.0 L373.7 422.6 L373.0 426.2 L372.4 429.8 L371.8 433.4 L371.4 437.1 L370.9 441.0 L370.6 444.8 L370.3 448.7 L370.1 452.5 L369.9 456.2 L369.8 459.6 L369.7 462.9 L369.5 466.1 L369.4 469.3 L369.3 472.4 L369.3 475.6 L369.3 478.7 L369.4 481.9 L369.7 485.0 L370.2 488.2 L370.8 491.5 L371.6 494.7 L372.4 497.8 L373.2 500.7 L374.0 503.3 L374.6 505.5 L375.1 507.1 L376.9 506.9 L377.0 505.2 L377.1 502.9 L377.2 500.3 L377.3 497.3 L377.5 494.2 L377.7 491.0 L377.9 487.9 L378.3 485.0 L378.7 482.2 L379.2 479.4 L379.7 476.6 L380.3 473.6 L380.9 470.5 L381.4 467.2 L381.9 463.9 L382.2 460.4 L382.4 456.7 L382.5 452.9 L382.5 449.1 L382.5 445.2 L382.3 441.3 L382.1 437.4 L381.9 433.7 L381.6 430.2 L381.4 426.7 L381.1 423.0 L380.8 419.4 L380.5 415.8 L380.1 412.5 L379.9 409.5 L379.6 407.0 L379.4 405.1Z"/><path d="M363.4 421.9 L362.8 424.1 L361.9 427.0 L360.8 430.5 L359.7 434.3 L358.6 438.4 L357.6 442.4 L356.9 446.2 L356.3 449.6 L356.0 452.6 L355.7 455.5 L355.5 458.3 L355.4 461.1 L355.4 463.8 L355.5 466.3 L355.8 468.9 L356.3 471.3 L356.9 473.8 L357.8 476.1 L358.9 478.3 L360.0 480.4 L361.1 482.2 L362.1 483.8 L362.9 485.2 L363.5 486.2 L364.5 485.8 L364.3 484.6 L363.9 483.1 L363.4 481.2 L362.9 479.2 L362.4 477.1 L362.1 474.9 L361.8 472.8 L361.7 470.7 L361.8 468.6 L362.0 466.3 L362.2 464.0 L362.5 461.5 L362.8 459.0 L363.1 456.2 L363.4 453.4 L363.7 450.4 L363.9 447.1 L364.1 443.3 L364.3 439.2 L364.4 435.0 L364.5 431.0 L364.6 427.4 L364.6 424.3 L364.6 422.1Z"/><path d="M392.4 422.1 L392.5 424.4 L392.6 427.4 L392.8 431.1 L393.0 435.1 L393.3 439.3 L393.6 443.4 L394.0 447.2 L394.4 450.5 L394.7 453.5 L395.2 456.4 L395.6 459.1 L396.0 461.7 L396.4 464.2 L396.8 466.5 L397.1 468.7 L397.3 470.8 L397.3 472.9 L397.2 475.0 L397.0 477.2 L396.6 479.3 L396.3 481.3 L395.9 483.1 L395.6 484.6 L395.5 485.8 L396.5 486.2 L397.1 485.1 L397.8 483.8 L398.7 482.1 L399.6 480.3 L400.6 478.2 L401.5 476.0 L402.2 473.6 L402.7 471.2 L403.0 468.7 L403.2 466.2 L403.2 463.6 L403.1 460.9 L402.9 458.2 L402.6 455.4 L402.1 452.5 L401.6 449.5 L401.0 446.1 L400.1 442.3 L399.0 438.3 L397.8 434.2 L396.5 430.4 L395.3 426.9 L394.3 424.0 L393.6 421.9Z"/></g></svg>
<div class="t" style="left:281px;top:480px;width:200px;text-align:center;font-size:22px;font-weight:bold;color:#d2d2c2;letter-spacing:0.5px;transform:scaleX(1.95);-webkit-text-stroke:0.7px #cfcfbc">GxSD1</div>
<div style="left:742px;top:193px;width:387px;height:407px;background:#23262b;border:1px solid #151618;overflow:hidden;border-radius:3px 3px 0 0"></div>
<div style="left:742px;top:193px;width:387px;height:20px;background:#383838;border-radius:3px 3px 0 0"></div>
<div class="t" style="left:746px;top:197px;width:363px;text-align:center;font-size:12px;font-weight:bold;color:#e8e8e8;letter-spacing:-0.3px">Guitare Mélo : Gxroom_simulator (par Guitarix team)</div>
<div style="left:1105px;top:196px;width:15px;height:15px;background:#f05252;border-radius:50%"></div>
<div style="left:742px;top:213px;width:387px;height:34px;background:#23262b"></div>
<div class="tb" style="left:753px;top:220px;width:40px;height:21px"><svg width="14" height="14" viewBox="0 0 14 14" style="left:5px;top:2px"><path d="M7 1.2 A5.8 5.8 0 1 1 3 2.8" fill="none" stroke="#eee" stroke-width="1.3"/><path d="M4.6 4.6 L7 7" stroke="#eee" stroke-width="1.6"/></svg><div class="t" style="left:24px;top:3px;font-size:12px;color:#ddd">0</div></div>
<div class="tb" style="left:853px;top:220px;width:61px;height:21px"><div class="t" style="left:7px;top:3px;font-size:11.5px;color:#ddd">(aucun)</div><svg width="7" height="5" style="left:50px;top:8px"><path d="M0 0 H7 L3.5 5Z" fill="#888"/></svg></div>
<div class="tb" style="left:921px;top:220px;width:20px;height:21px"><svg width="14" height="14" viewBox="0 0 14 14" style="left:3px;top:3px"><path d="M7 1 V13 M1 7 H13" stroke="#eee" stroke-width="1.4"/></svg></div>
<div class="tb" style="left:948px;top:220px;width:20px;height:21px;background:#25282d;border-color:#1a1c1f"><svg width="14" height="14" viewBox="0 0 14 14" style="left:3px;top:3px"><path d="M2 3 V12 H12 V3" fill="none" stroke="#666" stroke-width="1"/><path d="M7 2 V9 M4.5 6.5 L7 9 L9.5 6.5" fill="none" stroke="#666" stroke-width="1.2"/></svg></div>
<div class="tb" style="left:976px;top:220px;width:20px;height:21px;background:#25282d;border-color:#1a1c1f"><svg width="16" height="16" viewBox="0 0 16 16" style="left:2px;top:2px"><circle cx="8" cy="8" r="6" fill="none" stroke="#555" stroke-width="1.3"/><path d="M4 4 L12 12" stroke="#555" stroke-width="1.3"/></svg></div>
<div class="tb" style="left:1006px;top:220px;width:20px;height:21px"><svg width="16" height="16" viewBox="0 0 16 16" style="left:2px;top:2px"><path d="M13 5 A6 6 0 1 1 9.5 2.2" fill="none" stroke="#eee" stroke-width="1.4"/><path d="M5.7 6 A3.2 3.2 0 1 0 10.3 6 M8 4 V8" fill="none" stroke="#eee" stroke-width="1.3"/><path d="M11 1 L14 3 L11 4.5 Z" fill="#eee"/></svg></div>
<div class="tb" style="left:1041px;top:220px;width:38px;height:21px"><svg width="36" height="19" viewBox="0 0 36 19" style="left:0px;top:0px"><path d="M3 12.5 A9 9 0 0 1 19.5 10" fill="none" stroke="#eee" stroke-width="1.1"/><path d="M18 8.5 L21.5 10.5 L18 12.5 Z" fill="#eee"/><path d="M8 9 L14 16 M14 9 L8 16" stroke="#eee" stroke-width="1"/><path d="M3 12.5 H20" stroke="#bbb" stroke-width="0.8" stroke-dasharray="1.5 1"/><circle cx="29" cy="9.5" r="5" fill="#0a0a0a"/><circle cx="29" cy="9.5" r="3.2" fill="#6a0808"/></svg></div>
<div style="left:1090px;top:221px;width:30px;height:18px"><svg width="30" height="18" viewBox="0 0 30 18"><defs><linearGradient id="kbg" x1="0" y1="0" x2="0" y2="1"><stop offset="0" stop-color="#f4f4f4"/><stop offset="1" stop-color="#c8c8c8"/></linearGradient></defs><path d="M4 2 H26 L29 14 V16 H1 V14 Z" fill="url(#kbg)" stroke="#a0a0a0" stroke-width="0.6"/><path d="M1 14.5 H29" stroke="#999" stroke-width="0.8"/><g fill="#a8a8a8"><rect x="5.5" y="4" width="12" height="1.3"/><rect x="5" y="6.5" width="13" height="1.3"/><rect x="4.5" y="9" width="14" height="1.3"/><rect x="4" y="11.5" width="11" height="1.3"/><rect x="20" y="6.5" width="5" height="1.3"/><rect x="20.5" y="9" width="5" height="1.3"/><rect x="21" y="11.5" width="5" height="1.3"/></g><rect x="20" y="3.5" width="2" height="1.5" fill="#dddd20"/><rect x="23" y="3.5" width="2" height="1.5" fill="#dddd20"/></svg></div>
<div class="tb" style="left:803px;top:220px;width:21px;height:21px"><svg width="16" height="16" viewBox="0 0 16 16" style="left:2px;top:2px"><path d="M4 3 L4 13 M4 4 C7 4 6 10 12 12" fill="none" stroke="#eee" stroke-width="1.2"/><circle cx="4" cy="3" r="1.8" fill="#23262b" stroke="#eee" stroke-width="1"/><circle cx="12" cy="3" r="1.8" fill="#23262b" stroke="#eee" stroke-width="1"/><circle cx="4" cy="13" r="1.8" fill="#23262b" stroke="#eee" stroke-width="1"/><circle cx="12" cy="12" r="1.8" fill="#23262b" stroke="#eee" stroke-width="1"/></svg></div>
<div style="left:742px;top:247px;width:386px;height:353px;background:#23262b">
<div style="left:0;top:1px;width:385px;height:352px;border-radius:12px 16px 12px 12px;overflow:hidden;background:linear-gradient(90deg,#8a8a8a,#c8c8c8 4px,#dadada 10px,#dedede 368px,#ececec 377px,#e4e4e4 382px,#a0a0a0 385px)">
<div style="left:0;top:0;width:385px;height:12px;background:linear-gradient(#9a9a9a,rgba(222,222,222,0))"></div>
<div style="left:0;top:334px;width:385px;height:18px;background:linear-gradient(rgba(222,222,222,0),#eeeeee 45%,#d0d0d0 75%,#8a8a8a)"></div>
</div>
<div style="left:385px;top:0;width:1px;height:353px;background:#1c1e22"></div>
</div>
<svg width="1128" height="861" style="left:0;top:0"><defs><radialGradient id="kg" cx="0.6" cy="0.4" r="0.7"><stop offset="0" stop-color="#333"/><stop offset="0.6" stop-color="#222"/><stop offset="1" stop-color="#161616"/></radialGradient><filter id="bl"><feGaussianBlur stdDeviation="1.6"/></filter></defs><circle cx="908" cy="333" r="25" fill="#000" opacity="0.25" filter="url(#bl)"/><circle cx="904" cy="328" r="25" fill="#141414"/><polygon points="924.6,328.0 923.9,328.9 923.2,329.7 922.6,330.5 922.1,331.3 921.8,332.1 921.7,332.9 921.8,333.8 921.9,334.7 922.2,335.8 922.4,336.9 922.6,338.0 922.7,339.1 922.6,340.3 922.3,341.3 921.7,342.2 921.0,342.9 920.1,343.4 919.1,343.8 918.0,344.0 916.8,344.1 915.7,344.1 914.6,344.1 913.6,344.1 912.7,344.2 911.9,344.5 911.2,344.9 910.6,345.5 909.9,346.2 909.3,347.0 908.5,347.9 907.8,348.8 906.9,349.5 906.0,350.1 905.0,350.5 904.0,350.7 903.0,350.6 902.0,350.2 901.1,349.6 900.2,348.9 899.4,348.1 898.7,347.2 898.0,346.3 897.4,345.6 896.8,344.9 896.1,344.5 895.3,344.2 894.4,344.0 893.4,344.0 892.4,344.0 891.3,344.0 890.1,343.9 889.0,343.7 887.9,343.4 887.0,342.8 886.3,342.2 885.7,341.3 885.4,340.3 885.2,339.2 885.3,338.1 885.5,336.9 885.7,335.8 886.0,334.8 886.2,333.8 886.2,332.9 886.2,332.1 885.9,331.3 885.5,330.5 884.9,329.7 884.3,328.9 883.6,328.0 882.9,327.1 882.3,326.1 882.0,325.0 881.8,324.0 881.9,322.9 882.2,322.0 882.8,321.1 883.5,320.3 884.5,319.7 885.5,319.1 886.5,318.6 887.5,318.1 888.3,317.7 889.1,317.2 889.7,316.6 890.2,315.9 890.5,315.1 890.8,314.2 891.0,313.1 891.3,312.0 891.6,310.9 892.0,309.9 892.6,308.9 893.3,308.1 894.2,307.5 895.1,307.2 896.2,307.1 897.2,307.2 898.3,307.5 899.4,307.9 900.4,308.4 901.4,308.9 902.3,309.3 903.2,309.6 904.0,309.7 904.8,309.6 905.7,309.4 906.6,309.0 907.5,308.6 908.5,308.1 909.6,307.6 910.7,307.3 911.8,307.2 912.9,307.2 913.8,307.5 914.7,308.1 915.4,308.8 916.0,309.8 916.5,310.8 916.8,311.9 917.1,313.0 917.3,314.1 917.6,315.0 917.9,315.9 918.3,316.6 918.9,317.2 919.6,317.7 920.4,318.2 921.4,318.6 922.4,319.1 923.4,319.7 924.4,320.4 925.2,321.1 925.8,322.0 926.1,322.9 926.2,324.0 926.1,325.0 925.8,326.0 925.2,327.0" fill="url(#kg)" stroke="#0c0c0c" stroke-width="1.5"/><circle cx="891" cy="334" r="2.3" fill="#fff"/><circle cx="969" cy="333" r="25" fill="#000" opacity="0.25" filter="url(#bl)"/><circle cx="965" cy="328" r="25" fill="#141414"/><polygon points="985.6,328.0 984.9,328.9 984.2,329.7 983.6,330.5 983.1,331.3 982.8,332.1 982.7,332.9 982.8,333.8 982.9,334.7 983.2,335.8 983.4,336.9 983.6,338.0 983.7,339.1 983.6,340.3 983.3,341.3 982.7,342.2 982.0,342.9 981.1,343.4 980.1,343.8 979.0,344.0 977.8,344.1 976.7,344.1 975.6,344.1 974.6,344.1 973.7,344.2 972.9,344.5 972.2,344.9 971.6,345.5 970.9,346.2 970.3,347.0 969.5,347.9 968.8,348.8 967.9,349.5 967.0,350.1 966.0,350.5 965.0,350.7 964.0,350.6 963.0,350.2 962.1,349.6 961.2,348.9 960.4,348.1 959.7,347.2 959.0,346.3 958.4,345.6 957.8,344.9 957.1,344.5 956.3,344.2 955.4,344.0 954.4,344.0 953.4,344.0 952.3,344.0 951.1,343.9 950.0,343.7 948.9,343.4 948.0,342.8 947.3,342.2 946.7,341.3 946.4,340.3 946.2,339.2 946.3,338.1 946.5,336.9 946.7,335.8 947.0,334.8 947.2,333.8 947.2,332.9 947.2,332.1 946.9,331.3 946.5,330.5 945.9,329.7 945.3,328.9 944.6,328.0 943.9,327.1 943.3,326.1 943.0,325.0 942.8,324.0 942.9,322.9 943.2,322.0 943.8,321.1 944.5,320.3 945.5,319.7 946.5,319.1 947.5,318.6 948.5,318.1 949.3,317.7 950.1,317.2 950.7,316.6 951.2,315.9 951.5,315.1 951.8,314.2 952.0,313.1 952.3,312.0 952.6,310.9 953.0,309.9 953.6,308.9 954.3,308.1 955.2,307.5 956.1,307.2 957.2,307.1 958.2,307.2 959.3,307.5 960.4,307.9 961.4,308.4 962.4,308.9 963.3,309.3 964.2,309.6 965.0,309.7 965.8,309.6 966.7,309.4 967.6,309.0 968.5,308.6 969.5,308.1 970.6,307.6 971.7,307.3 972.8,307.2 973.9,307.2 974.8,307.5 975.7,308.1 976.4,308.8 977.0,309.8 977.5,310.8 977.8,311.9 978.1,313.0 978.3,314.1 978.6,315.0 978.9,315.9 979.3,316.6 979.9,317.2 980.6,317.7 981.4,318.2 982.4,318.6 983.4,319.1 984.4,319.7 985.4,320.4 986.2,321.1 986.8,322.0 987.1,322.9 987.2,324.0 987.1,325.0 986.8,326.0 986.2,327.0" fill="url(#kg)" stroke="#0c0c0c" stroke-width="1.5"/><circle cx="955" cy="318" r="2.3" fill="#fff"/><circle cx="908" cy="410" r="25" fill="#000" opacity="0.25" filter="url(#bl)"/><circle cx="904" cy="405" r="25" fill="#141414"/><polygon points="924.6,405.0 923.9,405.9 923.2,406.7 922.6,407.5 922.1,408.3 921.8,409.1 921.7,409.9 921.8,410.8 921.9,411.7 922.2,412.8 922.4,413.9 922.6,415.0 922.7,416.1 922.6,417.3 922.3,418.3 921.7,419.2 921.0,419.9 920.1,420.4 919.1,420.8 918.0,421.0 916.8,421.1 915.7,421.1 914.6,421.1 913.6,421.1 912.7,421.2 911.9,421.5 911.2,421.9 910.6,422.5 909.9,423.2 909.3,424.0 908.5,424.9 907.8,425.8 906.9,426.5 906.0,427.1 905.0,427.5 904.0,427.7 903.0,427.6 902.0,427.2 901.1,426.6 900.2,425.9 899.4,425.1 898.7,424.2 898.0,423.3 897.4,422.6 896.8,421.9 896.1,421.5 895.3,421.2 894.4,421.0 893.4,421.0 892.4,421.0 891.3,421.0 890.1,420.9 889.0,420.7 887.9,420.4 887.0,419.8 886.3,419.2 885.7,418.3 885.4,417.3 885.2,416.2 885.3,415.1 885.5,413.9 885.7,412.8 886.0,411.8 886.2,410.8 886.2,409.9 886.2,409.1 885.9,408.3 885.5,407.5 884.9,406.7 884.3,405.9 883.6,405.0 882.9,404.1 882.3,403.1 882.0,402.0 881.8,401.0 881.9,399.9 882.2,399.0 882.8,398.1 883.5,397.3 884.5,396.7 885.5,396.1 886.5,395.6 887.5,395.1 888.3,394.7 889.1,394.2 889.7,393.6 890.2,392.9 890.5,392.1 890.8,391.2 891.0,390.1 891.3,389.0 891.6,387.9 892.0,386.9 892.6,385.9 893.3,385.1 894.2,384.5 895.1,384.2 896.2,384.1 897.2,384.2 898.3,384.5 899.4,384.9 900.4,385.4 901.4,385.9 902.3,386.3 903.2,386.6 904.0,386.7 904.8,386.6 905.7,386.4 906.6,386.0 907.5,385.6 908.5,385.1 909.6,384.6 910.7,384.3 911.8,384.2 912.9,384.2 913.8,384.5 914.7,385.1 915.4,385.8 916.0,386.8 916.5,387.8 916.8,388.9 917.1,390.0 917.3,391.1 917.6,392.0 917.9,392.9 918.3,393.6 918.9,394.2 919.6,394.7 920.4,395.2 921.4,395.6 922.4,396.1 923.4,396.7 924.4,397.4 925.2,398.1 925.8,399.0 926.1,399.9 926.2,401.0 926.1,402.0 925.8,403.0 925.2,404.0" fill="url(#kg)" stroke="#0c0c0c" stroke-width="1.5"/><circle cx="892.5" cy="396.5" r="2.3" fill="#fff"/><circle cx="969" cy="410" r="25" fill="#000" opacity="0.25" filter="url(#bl)"/><circle cx="965" cy="405" r="25" fill="#141414"/><polygon points="985.6,405.0 984.9,405.9 984.2,406.7 983.6,407.5 983.1,408.3 982.8,409.1 982.7,409.9 982.8,410.8 982.9,411.7 983.2,412.8 983.4,413.9 983.6,415.0 983.7,416.1 983.6,417.3 983.3,418.3 982.7,419.2 982.0,419.9 981.1,420.4 980.1,420.8 979.0,421.0 977.8,421.1 976.7,421.1 975.6,421.1 974.6,421.1 973.7,421.2 972.9,421.5 972.2,421.9 971.6,422.5 970.9,423.2 970.3,424.0 969.5,424.9 968.8,425.8 967.9,426.5 967.0,427.1 966.0,427.5 965.0,427.7 964.0,427.6 963.0,427.2 962.1,426.6 961.2,425.9 960.4,425.1 959.7,424.2 959.0,423.3 958.4,422.6 957.8,421.9 957.1,421.5 956.3,421.2 955.4,421.0 954.4,421.0 953.4,421.0 952.3,421.0 951.1,420.9 950.0,420.7 948.9,420.4 948.0,419.8 947.3,419.2 946.7,418.3 946.4,417.3 946.2,416.2 946.3,415.1 946.5,413.9 946.7,412.8 947.0,411.8 947.2,410.8 947.2,409.9 947.2,409.1 946.9,408.3 946.5,407.5 945.9,406.7 945.3,405.9 944.6,405.0 943.9,404.1 943.3,403.1 943.0,402.0 942.8,401.0 942.9,399.9 943.2,399.0 943.8,398.1 944.5,397.3 945.5,396.7 946.5,396.1 947.5,395.6 948.5,395.1 949.3,394.7 950.1,394.2 950.7,393.6 951.2,392.9 951.5,392.1 951.8,391.2 952.0,390.1 952.3,389.0 952.6,387.9 953.0,386.9 953.6,385.9 954.3,385.1 955.2,384.5 956.1,384.2 957.2,384.1 958.2,384.2 959.3,384.5 960.4,384.9 961.4,385.4 962.4,385.9 963.3,386.3 964.2,386.6 965.0,386.7 965.8,386.6 966.7,386.4 967.6,386.0 968.5,385.6 969.5,385.1 970.6,384.6 971.7,384.3 972.8,384.2 973.9,384.2 974.8,384.5 975.7,385.1 976.4,385.8 977.0,386.8 977.5,387.8 977.8,388.9 978.1,390.0 978.3,391.1 978.6,392.0 978.9,392.9 979.3,393.6 979.9,394.2 980.6,394.7 981.4,395.2 982.4,395.6 983.4,396.1 984.4,396.7 985.4,397.4 986.2,398.1 986.8,399.0 987.1,399.9 987.2,401.0 987.1,402.0 986.8,403.0 986.2,404.0" fill="url(#kg)" stroke="#0c0c0c" stroke-width="1.5"/><circle cx="966" cy="391" r="2.3" fill="#fff"/></svg>
<div class="t" style="left:864px;top:284px;width:80px;text-align:center;font-size:15.5px;color:#151515">Predelay</div>
<div class="t" style="left:925px;top:284px;width:80px;text-align:center;font-size:15.5px;color:#151515">Size</div>
<div class="t" style="left:864px;top:361px;width:80px;text-align:center;font-size:15.5px;color:#151515">FB</div>
<div class="t" style="left:925px;top:361px;width:80px;text-align:center;font-size:15.5px;color:#151515">Dry/Wet</div>
<div class="t" style="left:884px;top:446px;width:100px;text-align:center;font-size:11px;color:#e6e6e6;transform:rotate(13deg)">Room Simulator</div>
<div class="t" style="left:895px;top:472px;width:80px;text-align:center;font-size:15.5px;color:#151515">Effect</div>
<div style="left:922px;top:493px;width:24px;height:24px;border-radius:50%;background:#2a1a18;box-shadow:0 0 0 1px #111"></div>
<div style="left:926px;top:497px;width:16px;height:16px;border-radius:50%;background:radial-gradient(circle at 40% 35%,#ff9090,#f00000 45%,#b00000)"></div>
<svg width="60" height="60" style="left:903px;top:520px"><defs><linearGradient id="gold" x1="0" y1="0" x2="1" y2="1"><stop offset="0" stop-color="#f0e0a0"/><stop offset="0.3" stop-color="#b08830"/><stop offset="0.55" stop-color="#6a4a10"/><stop offset="0.8" stop-color="#d8b860"/><stop offset="1" stop-color="#5a3a08"/></linearGradient></defs>
<circle cx="30" cy="30" r="25" fill="url(#gold)" stroke="#4a3808" stroke-width="1"/>
<circle cx="30" cy="30" r="19" fill="none" stroke="#f0e0a0" stroke-width="2"/><circle cx="30" cy="30" r="21.5" fill="none" stroke="#3a2a08" stroke-width="1.2"/>
<circle cx="30" cy="30" r="16" fill="#353a36" stroke="#100e08" stroke-width="2"/>
</svg>
<svg width="16" height="22" style="left:882px;top:199px"><path d="M1 1 L1 16 L5 12.5 L8 19 L10.5 18 L7.5 11.5 L12.5 11.5 Z" fill="#111" stroke="#fff" stroke-width="1.2"/></svg>
<div style="left:12px;top:550px;width:722px;height:235px;background:#23262b;border:1px solid #151618;overflow:hidden;border-radius:3px 3px 0 0"></div>
<div style="left:12px;top:550px;width:722px;height:20px;background:#383838;border-radius:3px 3px 0 0"></div>
<div class="t" style="left:16px;top:554px;width:698px;text-align:center;font-size:12px;font-weight:bold;color:#e8e8e8;letter-spacing:-0.3px">Guitare Mélo : GxBlueAmp (par Guitarix team)</div>
<div style="left:710px;top:553px;width:15px;height:15px;background:#5a5a5a;border-radius:50%"></div>
<div style="left:12px;top:570px;width:722px;height:34px;background:#23262b"></div>
<div class="tb" style="left:23px;top:577px;width:40px;height:21px"><svg width="14" height="14" viewBox="0 0 14 14" style="left:5px;top:2px"><path d="M7 1.2 A5.8 5.8 0 1 1 3 2.8" fill="none" stroke="#eee" stroke-width="1.3"/><path d="M4.6 4.6 L7 7" stroke="#eee" stroke-width="1.6"/></svg><div class="t" style="left:24px;top:3px;font-size:12px;color:#ddd">0</div></div>
<div class="tb" style="left:458px;top:577px;width:61px;height:21px"><div class="t" style="left:7px;top:3px;font-size:11.5px;color:#ddd">(aucun)</div><svg width="7" height="5" style="left:50px;top:8px"><path d="M0 0 H7 L3.5 5Z" fill="#888"/></svg></div>
<div class="tb" style="left:526px;top:577px;width:20px;height:21px"><svg width="14" height="14" viewBox="0 0 14 14" style="left:3px;top:3px"><path d="M7 1 V13 M1 7 H13" stroke="#eee" stroke-width="1.4"/></svg></div>
<div class="tb" style="left:553px;top:577px;width:20px;height:21px;background:#25282d;border-color:#1a1c1f"><svg width="14" height="14" viewBox="0 0 14 14" style="left:3px;top:3px"><path d="M2 3 V12 H12 V3" fill="none" stroke="#666" stroke-width="1"/><path d="M7 2 V9 M4.5 6.5 L7 9 L9.5 6.5" fill="none" stroke="#666" stroke-width="1.2"/></svg></div>
<div class="tb" style="left:581px;top:577px;width:20px;height:21px;background:#25282d;border-color:#1a1c1f"><svg width="16" height="16" viewBox="0 0 16 16" style="left:2px;top:2px"><circle cx="8" cy="8" r="6" fill="none" stroke="#555" stroke-width="1.3"/><path d="M4 4 L12 12" stroke="#555" stroke-width="1.3"/></svg></div>
<div class="tb" style="left:611px;top:577px;width:20px;height:21px"><svg width="16" height="16" viewBox="0 0 16 16" style="left:2px;top:2px"><path d="M13 5 A6 6 0 1 1 9.5 2.2" fill="none" stroke="#eee" stroke-width="1.4"/><path d="M5.7 6 A3.2 3.2 0 1 0 10.3 6 M8 4 V8" fill="none" stroke="#eee" stroke-width="1.3"/><path d="M11 1 L14 3 L11 4.5 Z" fill="#eee"/></svg></div>
<div class="tb" style="left:646px;top:577px;width:38px;height:21px"><svg width="36" height="19" viewBox="0 0 36 19" style="left:0px;top:0px"><path d="M3 12.5 A9 9 0 0 1 19.5 10" fill="none" stroke="#eee" stroke-width="1.1"/><path d="M18 8.5 L21.5 10.5 L18 12.5 Z" fill="#eee"/><path d="M8 9 L14 16 M14 9 L8 16" stroke="#eee" stroke-width="1"/><path d="M3 12.5 H20" stroke="#bbb" stroke-width="0.8" stroke-dasharray="1.5 1"/><circle cx="29" cy="9.5" r="5" fill="#0a0a0a"/><circle cx="29" cy="9.5" r="3.2" fill="#6a0808"/></svg></div>
<div style="left:695px;top:578px;width:30px;height:18px"><svg width="30" height="18" viewBox="0 0 30 18"><defs><linearGradient id="kbg" x1="0" y1="0" x2="0" y2="1"><stop offset="0" stop-color="#f4f4f4"/><stop offset="1" stop-color="#c8c8c8"/></linearGradient></defs><path d="M4 2 H26 L29 14 V16 H1 V14 Z" fill="url(#kbg)" stroke="#a0a0a0" stroke-width="0.6"/><path d="M1 14.5 H29" stroke="#999" stroke-width="0.8"/><g fill="#a8a8a8"><rect x="5.5" y="4" width="12" height="1.3"/><rect x="5" y="6.5" width="13" height="1.3"/><rect x="4.5" y="9" width="14" height="1.3"/><rect x="4" y="11.5" width="11" height="1.3"/><rect x="20" y="6.5" width="5" height="1.3"/><rect x="20.5" y="9" width="5" height="1.3"/><rect x="21" y="11.5" width="5" height="1.3"/></g><rect x="20" y="3.5" width="2" height="1.5" fill="#dddd20"/><rect x="23" y="3.5" width="2" height="1.5" fill="#dddd20"/></svg></div>
<div class="tb" style="left:409px;top:577px;width:21px;height:21px"><svg width="16" height="16" viewBox="0 0 16 16" style="left:2px;top:2px"><path d="M4 3 L4 13 M4 4 C7 4 6 10 12 12" fill="none" stroke="#eee" stroke-width="1.2"/><circle cx="4" cy="3" r="1.8" fill="#23262b" stroke="#eee" stroke-width="1"/><circle cx="12" cy="3" r="1.8" fill="#23262b" stroke="#eee" stroke-width="1"/><circle cx="4" cy="13" r="1.8" fill="#23262b" stroke="#eee" stroke-width="1"/><circle cx="12" cy="12" r="1.8" fill="#23262b" stroke="#eee" stroke-width="1"/></svg></div>
<div style="left:12px;top:604px;width:722px;height:180px;background:linear-gradient(100deg,#1c1c14 0%,#22221a 45%,#2e2c1c 100%);overflow:hidden"><div style="left:0;top:80px;width:300px;height:100px;background:radial-gradient(ellipse at 0% 100%,rgba(70,66,30,.7),rgba(0,0,0,0) 70%)"></div><div style="left:560px;top:0;width:162px;height:180px;background:radial-gradient(ellipse at 100% 40%,rgba(60,58,28,.6),rgba(0,0,0,0) 70%)"></div></div>
<svg width="722" height="180" style="left:12px;top:604px"><defs>
<linearGradient id="rg" x1="0" y1="0" x2="0" y2="1"><stop offset="0" stop-color="#241e20"/><stop offset="0.25" stop-color="#3a3230"/><stop offset="0.55" stop-color="#7c6e84"/><stop offset="0.85" stop-color="#4a3c4c"/><stop offset="1" stop-color="#2c2230"/></linearGradient>
<radialGradient id="yl" cx="0.06" cy="0.28" r="0.16"><stop offset="0" stop-color="#6e6214" stop-opacity="1"/><stop offset="1" stop-color="#6e6214" stop-opacity="0"/></radialGradient>
<radialGradient id="yr" cx="0.97" cy="0.32" r="0.12"><stop offset="0" stop-color="#6a6218" stop-opacity="1"/><stop offset="1" stop-color="#6a6218" stop-opacity="0"/></radialGradient>
</defs>
<path d="M110 5 Q380 -4 650 6 C695 8 711 30 711 62 L711 118 C711 158 692 176 650 176 L110 176 C42 176 11 148 11 92 C11 38 42 5 110 5 Z" fill="url(#rg)"/>
<path d="M110 5 Q380 -4 650 6 C695 8 711 30 711 62 L711 118 C711 158 692 176 650 176 L110 176 C42 176 11 148 11 92 C11 38 42 5 110 5 Z" fill="url(#yl)"/>
<path d="M110 5 Q380 -4 650 6 C695 8 711 30 711 62 L711 118 C711 158 692 176 650 176 L110 176 C42 176 11 148 11 92 C11 38 42 5 110 5 Z" fill="url(#yr)"/>
<path d="M112 12 Q380 4 648 13 C688 15 704 34 704 64 L704 116 C704 152 686 169 648 169 L112 169 C48 169 18 144 18 92 C18 44 48 12 112 12 Z" fill="#030303"/>
</svg>
<div style="left:63px;top:664px;width:61px;height:81px;border-radius:13px;background:linear-gradient(90deg,#1e1e1e,#141414 30%,#141414 70%,#1e1e1e);border:1px solid #2c2c2c"></div>
<div style="left:75px;top:677px;width:37px;height:55px;border-radius:9px;background:linear-gradient(#383838,#222 45%,#151515);border:2px solid #111;box-shadow:0 0 0 1px #262626"></div>
<div style="left:85px;top:666px;width:17px;height:5px;border-radius:3px;background:#b81818"></div>
<div class="t" style="left:54px;top:748px;width:80px;text-align:center;font-size:13.5px;font-weight:bold;color:#777a7e">POWER</div>
<div style="left:155px;top:659px;width:5px;height:88px;border-radius:3px;background:#260810"></div>
<div style="left:175px;top:659px;width:5px;height:88px;border-radius:3px;background:#280a16"></div>
<div style="left:195px;top:659px;width:5px;height:88px;border-radius:3px;background:#281020"></div>
<div style="left:215px;top:659px;width:5px;height:88px;border-radius:3px;background:#26182e"></div>
<div style="left:235px;top:659px;width:5px;height:88px;border-radius:3px;background:#1e1a3e"></div>
<div style="left:255px;top:659px;width:5px;height:88px;border-radius:3px;background:#18184a"></div>
<div style="left:275px;top:659px;width:5px;height:88px;border-radius:3px;background:#121258"></div>
<div style="left:295px;top:659px;width:5px;height:88px;border-radius:3px;background:#0e0e64"></div>
<div style="left:355px;top:666px;width:76px;height:76px;border-radius:50%;background:conic-gradient(#3a1414,#2a2a2a 25%,#3a1414 50%,#2a2a2a 75%,#3a1414);box-shadow:inset 0 0 4px #000"></div>
<div style="left:360px;top:671px;width:66px;height:66px;border-radius:50%;background:#0c0c0c"></div>
<div style="left:364px;top:675px;width:58px;height:58px;border-radius:50%;background:radial-gradient(circle at 50% 30%,#2a2a2a,#161616 80%);box-shadow:0 0 0 1px #262626"></div>
<div style="left:391px;top:677px;width:4px;height:8px;border-radius:2px;background:#aaa"></div>
<div class="t" style="left:343px;top:748px;width:100px;text-align:center;font-size:13.5px;font-weight:bold;color:#6e7276">VOLUME</div>
<div style="left:475px;top:666px;width:76px;height:76px;border-radius:50%;background:conic-gradient(#3a1414,#2a2a2a 25%,#3a1414 50%,#2a2a2a 75%,#3a1414);box-shadow:inset 0 0 4px #000"></div>
<div style="left:480px;top:671px;width:66px;height:66px;border-radius:50%;background:#0c0c0c"></div>
<div style="left:484px;top:675px;width:58px;height:58px;border-radius:50%;background:radial-gradient(circle at 50% 30%,#2a2a2a,#161616 80%);box-shadow:0 0 0 1px #262626"></div>
<div style="left:511px;top:677px;width:4px;height:8px;border-radius:2px;background:#aaa"></div>
<div class="t" style="left:463px;top:748px;width:100px;text-align:center;font-size:13.5px;font-weight:bold;color:#6e7276">TONE</div>
<div style="left:595px;top:666px;width:76px;height:76px;border-radius:50%;background:conic-gradient(#3a1414,#2a2a2a 25%,#3a1414 50%,#2a2a2a 75%,#3a1414);box-shadow:inset 0 0 4px #000"></div>
<div style="left:600px;top:671px;width:66px;height:66px;border-radius:50%;background:#0c0c0c"></div>
<div style="left:604px;top:675px;width:58px;height:58px;border-radius:50%;background:radial-gradient(circle at 50% 30%,#2a2a2a,#161616 80%);box-shadow:0 0 0 1px #262626"></div>
<div style="left:631px;top:677px;width:4px;height:8px;border-radius:2px;background:#aaa"></div>
<div class="t" style="left:583px;top:748px;width:100px;text-align:center;font-size:13.5px;font-weight:bold;color:#6e7276">MASTER</div>
<div class="t" style="left:514px;top:612px;font-size:26px;font-family:'Liberation Serif';font-weight:bold;color:#5e5830;letter-spacing:-1px;transform:scale(0.99,1.18);transform-origin:0 0">BLUEAMP</div>
<svg width="1128" height="861" style="left:0;top:0"><g fill="none" stroke="#f01010" stroke-linecap="round" stroke-linejoin="round">
<path d="M565 168.5 L584 168.5 L600 171 L611 172.5 L620 174 L623 178 L626 185" stroke-width="2.6"/>
<path d="M628 210.5 L612 212 L600 214 L597 217 L597.5 235" stroke-width="2.8"/>
<path d="M597.5 225 C599 260 603 300 606 340 C609 380 609 420 607 450 C605 480 602 520 600.5 558" stroke-width="4.4"/>
<path d="M719 235 L728 233 L735 231 L742 228 L751 225.5" stroke-width="2.8"/>
</g></svg></body></html>
